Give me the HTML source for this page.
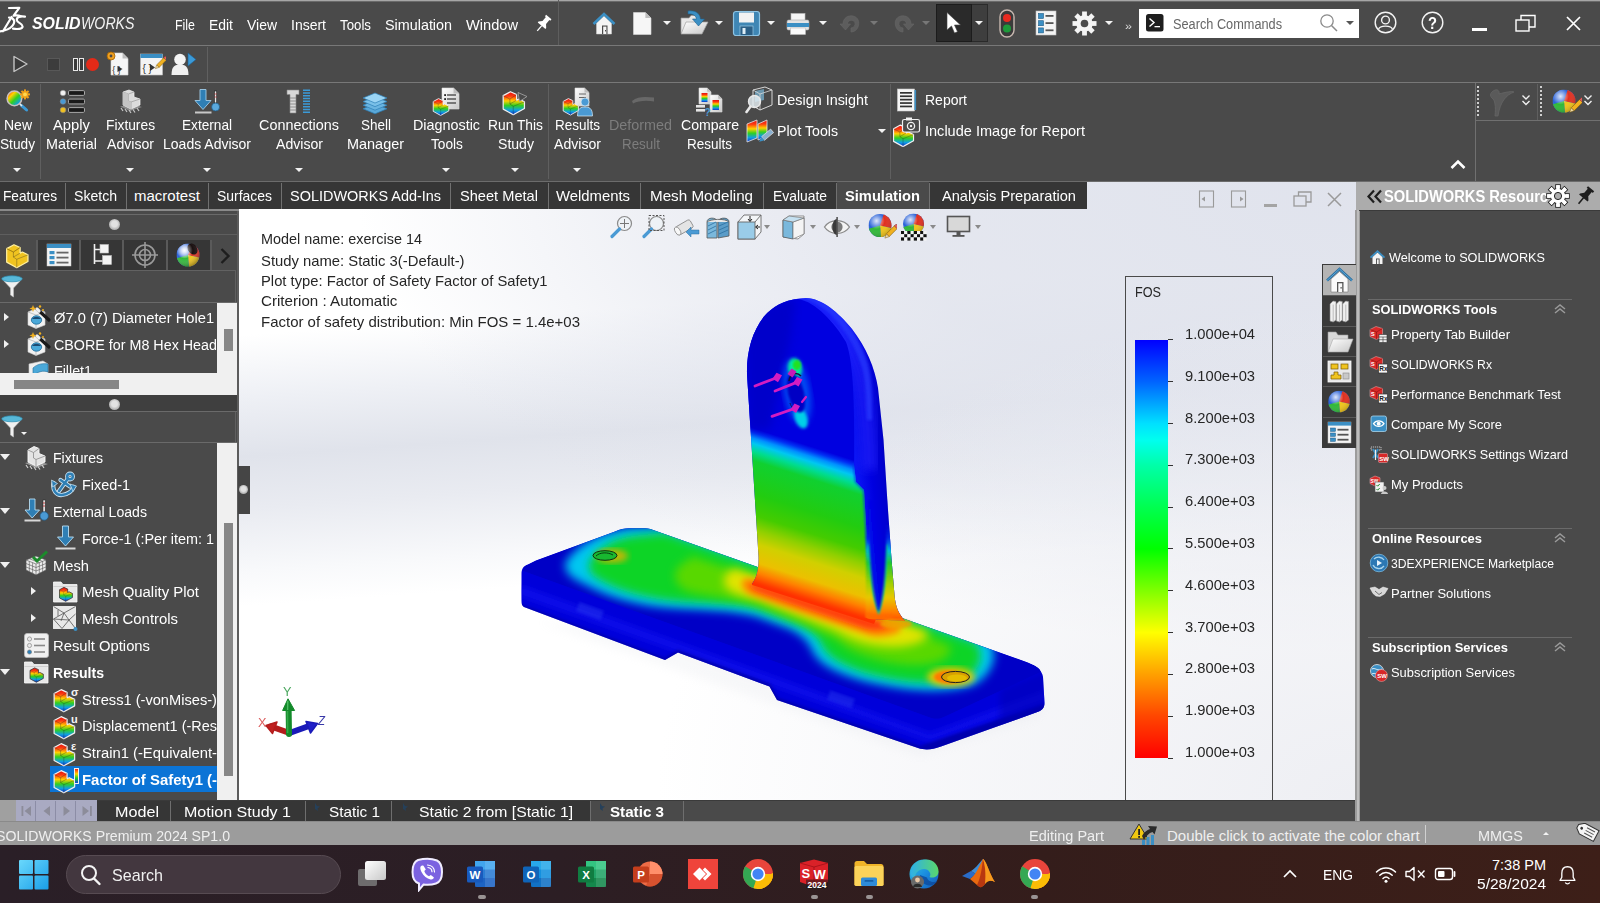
<!DOCTYPE html>
<html lang="en"><head><meta charset="utf-8"><title>SOLIDWORKS Simulation - Factor of Safety</title>
<style>
html,body{margin:0;padding:0;background:#000;}
#app{position:relative;width:1600px;height:903px;overflow:hidden;font-family:'Liberation Sans',sans-serif;color:#fff;}
.t{position:absolute;white-space:pre;line-height:1;transform-origin:0 50%;}
.dd{position:absolute;width:0;height:0;border-left:4px solid transparent;border-right:4px solid transparent;border-top:4px solid #f2f2f2;}
.dot{position:absolute;width:11px;height:11px;border-radius:50%;background:radial-gradient(circle at 50% 45%,#e2e2e2 0 35%,#bdbdbd 60%,#8a8a8a 100%);}
.exd{position:absolute;width:0;height:0;border-left:5.5px solid transparent;border-right:5.5px solid transparent;border-top:6px solid #f0f0f0;}
.exr{position:absolute;width:0;height:0;border-top:4.5px solid transparent;border-bottom:4.5px solid transparent;border-left:5.5px solid #f0f0f0;margin-left:-2px;margin-top:.5px;}
</style></head>
<body><div id="app">
<div style="position:absolute;left:0px;top:0px;width:1600px;height:845px;background:#4a4a4a;"></div>
<div style="position:absolute;left:239px;top:182px;width:1117px;height:618px;background:#fff;"></div>
<div style="position:absolute;left:239px;top:182px;width:1117px;height:618px;background:linear-gradient(176deg,#ffffff 0%,#ffffff 22%,#eef0f5 31%,#e0e3eb 39.5%,#e9ebf1 47%,#f8f9fb 56%,#ffffff 61%,#ffffff 100%);-webkit-mask-image:linear-gradient(90deg,#000 0%,#000 45%,rgba(0,0,0,.55) 100%);mask-image:linear-gradient(90deg,#000 0%,#000 45%,rgba(0,0,0,.55) 100%)"></div>
<div style="position:absolute;left:239px;top:182px;width:1117px;height:618px;background:radial-gradient(ellipse 1000px 470px at 100% 0%,rgba(223,226,236,.96) 0%,rgba(223,226,236,.82) 48%,rgba(223,226,236,.5) 72%,rgba(223,226,236,.25) 86%,rgba(223,226,236,0) 100%);"></div>
<div style="position:absolute;left:239px;top:182px;width:1117px;height:618px;background:radial-gradient(ellipse 700px 500px at 100% 100%,rgba(236,237,242,.9) 0%,rgba(236,237,242,.5) 50%,rgba(236,237,242,0) 100%);"></div>
<div style="position:absolute;left:0px;top:0px;width:1600px;height:1px;background:#a6a6a6;"></div>
<div style="position:absolute;left:0px;top:1px;width:1600px;height:1px;background:#6a6a6a;"></div>
<div style="position:absolute;left:0px;top:45px;width:1600px;height:1px;background:#787878;"></div>
<div style="position:absolute;left:558px;top:0px;width:1px;height:45px;background:#5e5e5e;"></div>
<div style="position:absolute;left:0px;top:82px;width:1600px;height:1px;background:#787878;"></div>
<div style="position:absolute;left:207px;top:47px;width:1px;height:35px;background:#606060;"></div>
<div style="position:absolute;left:40px;top:84px;width:1px;height:95px;background:#5f5f5f;"></div>
<div style="position:absolute;left:548px;top:84px;width:1px;height:95px;background:#5f5f5f;"></div>
<div style="position:absolute;left:890px;top:84px;width:1px;height:95px;background:#5f5f5f;"></div>
<div style="position:absolute;left:1475px;top:83px;width:1px;height:98px;background:#707070;"></div>
<div style="position:absolute;left:1475px;top:120px;width:125px;height:1px;background:#707070;"></div>
<div style="position:absolute;left:1537px;top:84px;width:1px;height:36px;background:#5f5f5f;"></div>
<div style="position:absolute;left:1477px;top:86px;width:2px;height:32px;background:repeating-linear-gradient(#cfcfcf 0 2px,transparent 2px 4px)"></div>
<div style="position:absolute;left:1540px;top:86px;width:2px;height:32px;background:repeating-linear-gradient(#cfcfcf 0 2px,transparent 2px 4px)"></div>
<div style="position:absolute;left:0px;top:181px;width:1600px;height:1px;background:#6c6c6c;"></div>
<div style="position:absolute;left:0px;top:182px;width:1087px;height:27px;background:#363636;"></div>
<div style="position:absolute;left:837px;top:182px;width:92px;height:27px;background:#4a4a4a;"></div>
<div style="position:absolute;left:65px;top:183px;width:1px;height:26px;background:#707070;"></div>
<div style="position:absolute;left:126px;top:183px;width:1px;height:26px;background:#707070;"></div>
<div style="position:absolute;left:208px;top:183px;width:1px;height:26px;background:#707070;"></div>
<div style="position:absolute;left:281px;top:183px;width:1px;height:26px;background:#707070;"></div>
<div style="position:absolute;left:450px;top:183px;width:1px;height:26px;background:#707070;"></div>
<div style="position:absolute;left:548px;top:183px;width:1px;height:26px;background:#707070;"></div>
<div style="position:absolute;left:640px;top:183px;width:1px;height:26px;background:#707070;"></div>
<div style="position:absolute;left:763px;top:183px;width:1px;height:26px;background:#707070;"></div>
<div style="position:absolute;left:836px;top:183px;width:1px;height:26px;background:#707070;"></div>
<div style="position:absolute;left:929px;top:183px;width:1px;height:26px;background:#707070;"></div>
<div style="position:absolute;left:0px;top:209px;width:239px;height:2px;background:#8a8a8a;"></div>
<svg style="position:absolute;left:239px;top:209px;overflow:hidden" width="1117" height="591" viewBox="239 209 1117 591"><defs>
<filter id="b3" x="-10%" y="-10%" width="120%" height="120%"><feGaussianBlur stdDeviation="3"/></filter>
<filter id="b5" x="-10%" y="-10%" width="120%" height="120%"><feGaussianBlur stdDeviation="5"/></filter>
<filter id="b2" x="-10%" y="-10%" width="120%" height="120%"><feGaussianBlur stdDeviation="1.8"/></filter>
<filter id="b1" x="-10%" y="-10%" width="120%" height="120%"><feGaussianBlur stdDeviation="0.9"/></filter>
<clipPath id="cpP"><path d="M521.5 574 C521.5 568 524 566 528 564.5 L536 560.5 L615 531.5 C620 529.5 624 528.3 629 528.3 L645 528.3 C649 528.3 652 529.5 656 531 L1025 661.5 C1034 665 1042 669 1043 677 L1044.5 703 C1044.5 708 1042 710.5 1036 712.5 L941 746.5 C932 749.5 926 750.5 918 748 L777 700 L769.5 686.5 L678 652.5 L665 660 L524 607 C522 606 521.5 604 521.5 601 Z"/></clipPath>
<clipPath id="cpT"><path d="M523 571 C523 567 525 566 528 564.5 L536 560.5 L615 531.5 C620 529.5 624 528.3 629 528.3 L645 528.3 C649 528.3 652 529.5 656 531 L1025 661.5 C1034 665 1040 667 1041 672 L944 717 C940 719 936 719.5 931 718 Z"/></clipPath>
<clipPath id="cpU"><path d="M752 584 C757 577 759 568 758.5 556 L747 374 C746.5 352 752 332 764 316.5 C775 304 790 298.5 806 298 C822 298.5 838 312 852 329 C866 347 875 368 878 388 L883.5 440 L887.5 503 L891.5 559 L894.5 595 C895.5 606 898 613 905 621 L870 619 Z"/></clipPath>
<clipPath id="cpF"><path d="M752 584 C757 577 759 568 758.5 556 L747 374 C746.5 352 752 332 764 316.5 C772 307 784 300 798 299 C816 302 834 322 846 342 C853 360 855 400 854 464 L856 482 L864 490 L867 540 L869 560 L874 600 L878.5 613 L874 624 L752 585 Z"/></clipPath>
<linearGradient id="gF" gradientUnits="userSpaceOnUse" x1="-54.3" y1="169.5" x2="-99.4" y2="310.4">
<stop offset="0" stop-color="#0000e0"/><stop offset=".03" stop-color="#0030f4"/><stop offset=".065" stop-color="#0090ff"/><stop offset=".10" stop-color="#00c8f0"/>
<stop offset=".15" stop-color="#00dc90"/><stop offset=".21" stop-color="#10d030"/><stop offset=".42" stop-color="#22cc10"/>
<stop offset=".56" stop-color="#44cc00"/><stop offset=".65" stop-color="#90d000"/><stop offset=".74" stop-color="#d0d000"/>
<stop offset=".86" stop-color="#ecc000"/><stop offset=".925" stop-color="#ff8000"/><stop offset=".985" stop-color="#ff3c00"/><stop offset="1" stop-color="#ff3000"/></linearGradient>
<linearGradient id="gPl" gradientUnits="userSpaceOnUse" x1="700" y1="600" x2="680" y2="660">
<stop offset="0" stop-color="#0000c4"/><stop offset=".45" stop-color="#0808ea"/><stop offset=".8" stop-color="#0000d6"/><stop offset="1" stop-color="#0000a8"/></linearGradient>
<linearGradient id="gRim" gradientUnits="userSpaceOnUse" x1="0" y1="520" x2="0" y2="622">
<stop offset="0" stop-color="#0010d8" stop-opacity="0"/><stop offset=".18" stop-color="#0030e8" stop-opacity=".9"/><stop offset=".3" stop-color="#00b8e0"/><stop offset=".42" stop-color="#20c830"/>
<stop offset=".62" stop-color="#a0d000"/><stop offset=".76" stop-color="#e8c800"/><stop offset=".9" stop-color="#ff8000"/><stop offset="1" stop-color="#ff4800"/></linearGradient>
<linearGradient id="gSide" gradientUnits="userSpaceOnUse" x1="850" y1="400" x2="892" y2="396">
<stop offset="0" stop-color="#0a14f4"/><stop offset=".35" stop-color="#0000e0"/><stop offset="1" stop-color="#0000b8"/></linearGradient>
</defs><path d="M540 622 L920 756 L1040 716 L1044 690 L700 640 Z" fill="#c8ccd6" opacity=".12" filter="url(#b5)"/><path d="M521.5 574 C521.5 568 524 566 528 564.5 L536 560.5 L615 531.5 C620 529.5 624 528.3 629 528.3 L645 528.3 C649 528.3 652 529.5 656 531 L1025 661.5 C1034 665 1042 669 1043 677 L1044.5 703 C1044.5 708 1042 710.5 1036 712.5 L941 746.5 C932 749.5 926 750.5 918 748 L777 700 L769.5 686.5 L678 652.5 L665 660 L524 607 C522 606 521.5 604 521.5 601 Z" fill="#0000da"/><g clip-path="url(#cpP)"><path d="M520 585 L930 733 L1046 690 L1046 700 L930 742 L520 596 Z" fill="#1418f6" opacity=".55" filter="url(#b3)"/><path d="M520 604 L665 658 L678 650 L770 684 L778 698 L920 746 L1046 704 L1046 716 L920 756 L520 614 Z" fill="#000090" opacity=".6" filter="url(#b2)"/><path d="M1000 690 L1046 670 L1046 715 L1000 730 Z" fill="#0000b0" opacity=".5" filter="url(#b3)"/><rect x="577" y="606" width="26" height="10" fill="#2a3cf0" opacity=".45" filter="url(#b2)" transform="rotate(20 590 611)"/><rect x="828" y="694" width="26" height="10" fill="#2a3cf0" opacity=".45" filter="url(#b2)" transform="rotate(19 840 699)"/></g><g clip-path="url(#cpT)"><path d="M523 571 C523 567 525 566 528 564.5 L536 560.5 L615 531.5 C620 529.5 624 528.3 629 528.3 L645 528.3 C649 528.3 652 529.5 656 531 L1025 661.5 C1034 665 1040 667 1041 672 L944 717 C940 719 936 719.5 931 718 Z" fill="#0000c6"/><g filter="url(#b5)"><path d="M564 566 C573 546 600 532 630 528 L662 527 L760 561 L900 610 L990 642 C1000 656 990 676 975 684 C950 694 905 692 860 680 C835 672 818 664 812 650 C808 640 800 634 790 629 L758 617 C735 610 700 610 670 608 C640 606 610 598 588 586 C575 580 564 574 566 566 Z" fill="#00c8f0"/></g><g filter="url(#b5)"><path d="M588 566 C594 550 612 539 634 536 L664 533 L760 566 L900 616 L976 643 C986 656 978 672 966 678 C945 686 905 684 866 673 C845 666 828 658 822 646 C818 634 806 628 794 623 L760 610 C738 603 705 604 675 601 C648 598 622 592 604 582 C594 577 587 572 590 566 Z" fill="#10d428"/></g><g filter="url(#b5)"><path d="M690 556 L760 578 L905 626 L950 646 C954 660 930 668 900 664 C870 660 846 650 838 640 L800 622 L760 606 C740 598 715 598 690 592 C670 586 670 566 690 560 Z" fill="#58d800"/></g><g filter="url(#b5)"><path d="M733 568 L762 578 L905 624 L928 632 C930 642 905 650 880 646 C860 644 845 636 835 630 L795 614 L760 600 C745 596 730 594 725 586 C722 578 726 572 733 570 Z" fill="#e0e400"/></g><g filter="url(#b3)"><path d="M746 578 L770 584 L900 624 C906 632 890 638 872 636 L800 612 L754 596 C742 592 738 582 746 578 Z" fill="#ff8a00"/><path d="M752 582 L890 624 C888 631 876 632 864 629 L790 604 L756 592 C748 588 748 584 752 582 Z" fill="#ff3a08"/></g><ellipse cx="951" cy="677" rx="24" ry="10" fill="#f0c800" opacity=".9" filter="url(#b3)"/><ellipse cx="949" cy="677" rx="15" ry="6.5" fill="#ff7a00" filter="url(#b2)"/><ellipse cx="612" cy="556" rx="16" ry="7" fill="#e8b000" opacity=".8" filter="url(#b3)"/></g><ellipse cx="955.5" cy="677" rx="14" ry="5.6" fill="#d8a000" stroke="#202020" stroke-width="1"/><ellipse cx="957" cy="678" rx="10" ry="3.6" fill="#e8c400" opacity=".8"/><ellipse cx="605" cy="555.5" rx="12" ry="4.8" fill="#18b830" stroke="#103010" stroke-width="1"/><path d="M596 556 C600 552 608 552 613 555" stroke="#084010" stroke-width="1" fill="none"/><path d="M752 584 C757 577 759 568 758.5 556 L747 374 C746.5 352 752 332 764 316.5 C775 304 790 298.5 806 298 C822 298.5 838 312 852 329 C866 347 875 368 878 388 L883.5 440 L887.5 503 L891.5 559 L894.5 595 C895.5 606 898 613 905 621 L870 619 Z" fill="url(#gSide)"/><g clip-path="url(#cpU)"><path d="M790 304 C822 306 846 332 858 366 C866 392 868 430 870 470" stroke="#2a2cff" stroke-width="16" fill="none" filter="url(#b5)" opacity=".55"/><path d="M800 298 C830 304 852 336 862 368 C866 384 866 400 867 420 L872 420 C872 396 872 380 868 364 C858 330 834 300 806 296 Z" fill="#2a3cff" opacity=".7" filter="url(#b2)"/><path d="M880 390 L886 470 L893 580 L900 622 L910 622 L898 500 L884 380 Z" fill="#000098" opacity=".55" filter="url(#b2)"/></g><g clip-path="url(#cpF)"><rect x="730" y="290" width="170" height="340" fill="url(#gF)"/><path d="M854 464 L856 482 L864 490 L867 540 L869 560 L874 600" stroke="#0040e8" stroke-width="2.5" fill="none" filter="url(#b1)" opacity=".8"/><path d="M745 330 L770 305 L796 298 L790 340 L770 430 L748 430 Z" fill="#0000b8" opacity=".55" filter="url(#b5)"/><ellipse cx="797" cy="392" rx="13" ry="33" fill="#0060f8" filter="url(#b3)" transform="rotate(-10 797 392)" opacity=".8"/><ellipse cx="795" cy="368" rx="7" ry="10" fill="#00e8a0" filter="url(#b2)" transform="rotate(-10 795 368)"/><ellipse cx="797" cy="365" rx="4" ry="5" fill="#20e020" filter="url(#b1)"/><ellipse cx="801" cy="418" rx="6" ry="11" fill="#00d0e8" filter="url(#b2)" transform="rotate(-20 801 418)"/><ellipse cx="796" cy="393" rx="8" ry="20" fill="#0000c4" transform="rotate(-14 796 393)" filter="url(#b1)"/><path d="M789 381 C790 374 796 371 801 376" stroke="#101040" stroke-width="1.6" fill="none"/><path d="M790 403 C791 407 794 410 797 410" stroke="#101060" stroke-width="1" fill="none"/></g><g clip-path="url(#cpU)"><path d="M866 520 L900 520 L930 632 L866 632 Z" fill="url(#gRim)" filter="url(#b1)"/><path d="M869.3 545 C870.3 572 873 596 878.6 611.8 C883 599 885.8 575 886.3 545" fill="none" stroke="#00c890" stroke-width="2.4" filter="url(#b1)"/><path d="M868.6 520 C869.5 560 872.5 594 878.6 611.8 C883.5 598 886.3 570 886.5 520 L887 500 L868.2 500 Z" fill="url(#gSide)" filter="url(#b1)"/><path d="M866 612 L878 616 L890 614 L898 624 L866 626 Z" fill="#ff6a00" filter="url(#b2)" opacity=".9"/></g><ellipse cx="896" cy="624" rx="16" ry="4.5" fill="#f0a000" filter="url(#b2)" opacity=".85"/><line x1="755" y1="386" x2="778" y2="377.2" stroke="#d41cc2" stroke-width="2.8" stroke-linecap="round"/><path d="M772.5 378.7 L776.5 372.7 L782 375.2 L778 382.2 Z" fill="#d41cc2"/><line x1="775" y1="391" x2="798.5" y2="381.6" stroke="#d41cc2" stroke-width="2.8" stroke-linecap="round"/><path d="M793.0 383.1 L797.0 377.1 L802.5 379.6 L798.5 386.6 Z" fill="#d41cc2"/><line x1="772" y1="416.4" x2="796" y2="408" stroke="#d41cc2" stroke-width="2.8" stroke-linecap="round"/><path d="M790.5 409.5 L794.5 403.5 L800 406 L796 413 Z" fill="#d41cc2"/><path d="M787.5 374 L791.5 368.5 L796.5 371.5 L792.5 377.5 Z" fill="#c81ab6"/><path d="M802 402 L806 397" stroke="#d41cc2" stroke-width="2.2" stroke-linecap="round"/><g>
<path d="M289.5 733 L271 726.5" stroke="#b41c1c" stroke-width="6" stroke-linecap="round"/><path d="M277 722 L266 725.5 L272.5 733.5 Z" fill="#c02020" stroke="#b41c1c" stroke-width="1.5" stroke-linejoin="round"/>
<path d="M289.5 733 L309 726" stroke="#1a1ab8" stroke-width="6" stroke-linecap="round"/><path d="M306 721.5 L317.5 723.5 L310.5 733 Z" fill="#2020c8" stroke="#1a1ab8" stroke-width="1.5" stroke-linejoin="round"/>
<path d="M289 734 L288.6 708" stroke="#138a2a" stroke-width="6" stroke-linecap="round"/><path d="M287.6 733 L287.4 706" stroke="#3cb050" stroke-width="1.6" opacity=".8"/>
<path d="M282.6 710.5 L288 698.8 L294.6 710.5 Z" fill="#138a2a" stroke="#138a2a" stroke-width="1" stroke-linejoin="round"/><path d="M287.8 701 L287.6 710" stroke="#5cc870" stroke-width="1.4" opacity=".8"/>
</g></svg>
<span class="t" style="left:283.4px;top:686.2px;font-size:12.5px;color:#4ca860;transform:scaleX(1.019);">Y</span>
<span class="t" style="left:258.4px;top:717.4px;font-size:12px;color:#dc6060;transform:scaleX(1.060);">X</span>
<span class="t" style="left:317.8px;top:714.9px;font-size:12px;color:#3838a8;font-style:italic;transform:scaleX(0.953);">Z</span>
<span class="t" style="left:175.0px;top:16.7px;font-size:15px;transform:scaleX(0.827);">File</span>
<span class="t" style="left:209.0px;top:16.7px;font-size:15px;transform:scaleX(0.928);">Edit</span>
<span class="t" style="left:247.0px;top:16.7px;font-size:15px;transform:scaleX(0.930);">View</span>
<span class="t" style="left:291.0px;top:16.7px;font-size:15px;transform:scaleX(0.933);">Insert</span>
<span class="t" style="left:340.0px;top:16.7px;font-size:15px;transform:scaleX(0.885);">Tools</span>
<span class="t" style="left:385.0px;top:16.7px;font-size:15px;transform:scaleX(0.957);">Simulation</span>
<span class="t" style="left:466.0px;top:16.7px;font-size:15px;transform:scaleX(0.975);">Window</span>
<span class="t" style="left:32.4px;top:16.0px;font-size:16px;font-weight:700;font-style:italic;transform:scaleX(0.992);">SOLID</span>
<span class="t" style="left:81.2px;top:16.0px;font-size:16px;color:#f4f4f4;font-style:italic;transform:scaleX(0.885);">WORKS</span>
<div style="position:absolute;left:1139px;top:9px;width:220px;height:29px;background:#fff;"></div>
<span class="t" style="left:1173.0px;top:17.2px;font-size:14px;color:#666;transform:scaleX(0.910);">Search Commands</span>
<span class="t" style="left:3.5px;top:116.7px;font-size:15px;transform:scaleX(0.933);">New</span>
<span class="t" style="left:0.0px;top:136.0px;font-size:15px;transform:scaleX(0.912);">Study</span>
<span class="t" style="left:53.0px;top:116.7px;font-size:15px;transform:scaleX(0.986);">Apply</span>
<span class="t" style="left:46.0px;top:136.0px;font-size:15px;transform:scaleX(0.956);">Material</span>
<span class="t" style="left:106.0px;top:116.7px;font-size:15px;transform:scaleX(0.919);">Fixtures</span>
<span class="t" style="left:107.0px;top:136.0px;font-size:15px;transform:scaleX(0.939);">Advisor</span>
<span class="t" style="left:182.0px;top:116.7px;font-size:15px;transform:scaleX(0.909);">External</span>
<span class="t" style="left:163.0px;top:136.0px;font-size:15px;transform:scaleX(0.934);">Loads Advisor</span>
<span class="t" style="left:259.0px;top:116.7px;font-size:15px;transform:scaleX(0.959);">Connections</span>
<span class="t" style="left:275.5px;top:136.0px;font-size:15px;transform:scaleX(0.939);">Advisor</span>
<span class="t" style="left:360.5px;top:116.7px;font-size:15px;transform:scaleX(0.899);">Shell</span>
<span class="t" style="left:347.0px;top:136.0px;font-size:15px;transform:scaleX(0.963);">Manager</span>
<span class="t" style="left:413.0px;top:116.7px;font-size:15px;transform:scaleX(0.957);">Diagnostic</span>
<span class="t" style="left:430.5px;top:136.0px;font-size:15px;transform:scaleX(0.913);">Tools</span>
<span class="t" style="left:488.0px;top:116.7px;font-size:15px;transform:scaleX(0.920);">Run This</span>
<span class="t" style="left:497.5px;top:136.0px;font-size:15px;transform:scaleX(0.938);">Study</span>
<span class="t" style="left:554.5px;top:116.7px;font-size:15px;transform:scaleX(0.899);">Results</span>
<span class="t" style="left:553.5px;top:136.0px;font-size:15px;transform:scaleX(0.939);">Advisor</span>
<span class="t" style="left:609.0px;top:116.7px;font-size:15px;color:#7d7d7d;transform:scaleX(0.957);">Deformed</span>
<span class="t" style="left:621.5px;top:136.0px;font-size:15px;color:#7d7d7d;transform:scaleX(0.893);">Result</span>
<span class="t" style="left:680.5px;top:116.7px;font-size:15px;transform:scaleX(0.940);">Compare</span>
<span class="t" style="left:687.0px;top:136.0px;font-size:15px;transform:scaleX(0.899);">Results</span>
<span class="t" style="left:777.0px;top:92.0px;font-size:15px;transform:scaleX(0.957);">Design Insight</span>
<span class="t" style="left:777.0px;top:123.4px;font-size:15px;transform:scaleX(0.942);">Plot Tools</span>
<span class="t" style="left:925.0px;top:92.0px;font-size:15px;transform:scaleX(0.933);">Report</span>
<span class="t" style="left:925.0px;top:123.4px;font-size:15px;transform:scaleX(0.969);">Include Image for Report</span>
<div class="dd" style="left:13px;top:168px"></div>
<div class="dd" style="left:126px;top:168px"></div>
<div class="dd" style="left:203px;top:168px"></div>
<div class="dd" style="left:295px;top:168px"></div>
<div class="dd" style="left:442px;top:168px"></div>
<div class="dd" style="left:511px;top:168px"></div>
<div class="dd" style="left:573px;top:168px"></div>
<div class="dd" style="left:663px;top:21px"></div>
<div class="dd" style="left:715px;top:21px"></div>
<div class="dd" style="left:767px;top:21px"></div>
<div class="dd" style="left:819px;top:21px"></div>
<div class="dd" style="left:1105px;top:21px"></div>
<div class="dd" style="left:870px;top:21px;border-top-color:#777"></div>
<div class="dd" style="left:922px;top:21px;border-top-color:#777"></div>
<div class="dd" style="left:878px;top:129px"></div>
<span class="t" style="left:3.0px;top:187.7px;font-size:15px;transform:scaleX(0.912);">Features</span>
<span class="t" style="left:74.0px;top:187.7px;font-size:15px;transform:scaleX(0.938);">Sketch</span>
<span class="t" style="left:134.0px;top:187.7px;font-size:15px;">macrotest</span>
<span class="t" style="left:217.0px;top:187.7px;font-size:15px;transform:scaleX(0.929);">Surfaces</span>
<span class="t" style="left:290.0px;top:187.7px;font-size:15px;transform:scaleX(0.964);">SOLIDWORKS Add-Ins</span>
<span class="t" style="left:460.0px;top:187.7px;font-size:15px;transform:scaleX(0.974);">Sheet Metal</span>
<span class="t" style="left:556.0px;top:187.7px;font-size:15px;transform:scaleX(0.990);">Weldments</span>
<span class="t" style="left:650.0px;top:187.7px;font-size:15px;transform:scaleX(1.013);">Mesh Modeling</span>
<span class="t" style="left:773.0px;top:187.7px;font-size:15px;transform:scaleX(0.925);">Evaluate</span>
<span class="t" style="left:845.0px;top:187.7px;font-size:15px;font-weight:700;transform:scaleX(0.978);">Simulation</span>
<span class="t" style="left:942.0px;top:187.7px;font-size:15px;transform:scaleX(0.974);">Analysis Preparation</span>
<div style="position:absolute;left:0px;top:211px;width:239px;height:589px;background:#4a4a4a;"></div>
<div style="position:absolute;left:237px;top:211px;width:2px;height:589px;background:#5c5c5c;"></div>
<div style="position:absolute;left:0px;top:214px;width:237px;height:1px;background:#6a6a6a;"></div>
<div class="dot" style="left:109px;top:219px"></div>
<div style="position:absolute;left:0px;top:234px;width:237px;height:1px;background:#5e5e5e;"></div>
<div style="position:absolute;left:37px;top:240px;width:174px;height:30px;background:#363636;"></div>
<div style="position:absolute;left:36px;top:240px;width:2px;height:30px;background:#5a5a5a;"></div>
<div style="position:absolute;left:79px;top:240px;width:2px;height:30px;background:#5a5a5a;"></div>
<div style="position:absolute;left:122px;top:240px;width:2px;height:30px;background:#5a5a5a;"></div>
<div style="position:absolute;left:166px;top:240px;width:2px;height:30px;background:#5a5a5a;"></div>
<div style="position:absolute;left:210px;top:240px;width:2px;height:30px;background:#5a5a5a;"></div>
<div style="position:absolute;left:0px;top:270px;width:236px;height:1px;background:#626262;"></div>
<div style="position:absolute;left:235px;top:270px;width:1px;height:33px;background:#606060;"></div>
<div style="position:absolute;left:0px;top:302px;width:237px;height:1px;background:#6a6a6a;"></div>
<div style="position:absolute;left:217px;top:303px;width:20px;height:92px;background:#f0f0f0;"></div>
<div style="position:absolute;left:0px;top:373px;width:237px;height:22px;background:#f0f0f0;"></div>
<div style="position:absolute;left:224px;top:329px;width:9px;height:22px;background:#868686;"></div>
<div style="position:absolute;left:14px;top:380px;width:105px;height:9px;background:#868686;"></div>
<div style="position:absolute;left:0px;top:395px;width:237px;height:16px;background:#3f3f3f;"></div>
<div class="dot" style="left:109px;top:399px"></div>
<div style="position:absolute;left:0px;top:411px;width:237px;height:1px;background:#6a6a6a;"></div>
<div style="position:absolute;left:235px;top:412px;width:1px;height:30px;background:#606060;"></div>
<div style="position:absolute;left:0px;top:442px;width:237px;height:1px;background:#6a6a6a;"></div>
<div style="position:absolute;left:217px;top:443px;width:20px;height:357px;background:#f0f0f0;"></div>
<div style="position:absolute;left:224px;top:523px;width:9px;height:253px;background:#868686;"></div>
<div style="position:absolute;left:238px;top:466px;width:12px;height:48px;background:#454545;"></div>
<div class="dot" style="left:239px;top:485px;width:9px;height:9px"></div>
<div style="position:absolute;left:50px;top:766px;width:167px;height:26px;background:#0b74d6;"></div>
<span class="t" style="left:54.0px;top:310.0px;font-size:15.5px;transform:scaleX(0.948);">Ø7.0 (7) Diameter Hole1</span>
<span class="t" style="left:54.0px;top:337.0px;font-size:15.5px;transform:scaleX(0.923);">CBORE for M8 Hex Head</span>
<div style="position:absolute;left:0;top:355px;width:217px;height:18px;overflow:hidden">
<span class="t" style="left:54.0px;top:8.4px;font-size:15.5px;transform:scaleX(0.919);">Fillet1</span>
</div>
<span class="t" style="left:53.0px;top:450.4px;font-size:15.5px;transform:scaleX(0.907);">Fixtures</span>
<span class="t" style="left:82.0px;top:477.2px;font-size:15.5px;transform:scaleX(0.929);">Fixed-1</span>
<span class="t" style="left:53.0px;top:504.0px;font-size:15.5px;transform:scaleX(0.909);">External Loads</span>
<span class="t" style="left:82.0px;top:530.8px;font-size:15.5px;transform:scaleX(0.929);">Force-1 (:Per item: 1</span>
<span class="t" style="left:53.0px;top:557.6px;font-size:15.5px;transform:scaleX(0.950);">Mesh</span>
<span class="t" style="left:82.0px;top:584.4px;font-size:15.5px;transform:scaleX(0.963);">Mesh Quality Plot</span>
<span class="t" style="left:82.0px;top:611.2px;font-size:15.5px;transform:scaleX(0.961);">Mesh Controls</span>
<span class="t" style="left:53.0px;top:638.0px;font-size:15.5px;transform:scaleX(0.954);">Result Options</span>
<span class="t" style="left:53.0px;top:664.8px;font-size:15.5px;font-weight:700;transform:scaleX(0.911);">Results</span>
<span class="t" style="left:82.0px;top:691.6px;font-size:15.5px;transform:scaleX(0.944);">Stress1 (-vonMises-)</span>
<span class="t" style="left:82.0px;top:718.4px;font-size:15.5px;transform:scaleX(0.933);">Displacement1 (-Res</span>
<span class="t" style="left:82.0px;top:745.2px;font-size:15.5px;transform:scaleX(0.955);">Strain1 (-Equivalent-</span>
<span class="t" style="left:82.0px;top:772.0px;font-size:15.5px;font-weight:700;transform:scaleX(0.962);">Factor of Safety1 (-</span>
<div class="exd" style="left:0px;top:454px"></div>
<div class="exd" style="left:0px;top:508px"></div>
<div class="exd" style="left:0px;top:562px"></div>
<div class="exd" style="left:0px;top:669px"></div>
<div class="exr" style="left:6px;top:312px"></div>
<div class="exr" style="left:6px;top:339px"></div>
<div class="exr" style="left:33px;top:586px"></div>
<div class="exr" style="left:33px;top:613px"></div>
<span class="t" style="left:261.0px;top:231.7px;font-size:14.3px;color:#262626;transform:scaleX(1.008);">Model name: exercise 14</span>
<span class="t" style="left:260.5px;top:253.7px;font-size:14.3px;color:#262626;transform:scaleX(1.037);">Study name: Static 3(-Default-)</span>
<span class="t" style="left:261.0px;top:273.5px;font-size:14.3px;color:#262626;transform:scaleX(1.033);">Plot type: Factor of Safety Factor of Safety1</span>
<span class="t" style="left:260.5px;top:294.2px;font-size:14.3px;color:#262626;transform:scaleX(1.060);">Criterion : Automatic</span>
<span class="t" style="left:261.0px;top:315.0px;font-size:14.3px;color:#262626;transform:scaleX(1.048);">Factor of safety distribution: Min FOS = 1.4e+03</span>
<div style="position:absolute;left:1125px;top:276px;width:146px;height:524px;border:1px solid #4a4a4a;border-bottom:none;box-sizing:content-box"></div>
<span class="t" style="left:1135.0px;top:284.9px;font-size:14.6px;color:#262626;transform:scaleX(0.867);">FOS</span>
<div style="position:absolute;left:1134.5px;top:339.5px;width:33.5px;height:418px;background:linear-gradient(180deg,#0000ff 0%,#0064ff 10%,#00e0ff 20%,#00ffee 24%,#00ffa8 30%,#00ff50 40%,#00ff00 50%,#80ff00 60%,#ffff00 70%,#ffa000 80%,#ff4600 90%,#ff0000 100%);"></div>
<div style="position:absolute;left:1168px;top:339px;width:5px;height:1px;background:#333;"></div>
<span class="t" style="left:1185.0px;top:326.9px;font-size:14.6px;color:#262626;transform:scaleX(1.009);">1.000e+04</span>
<div style="position:absolute;left:1168px;top:381px;width:5px;height:1px;background:#333;"></div>
<span class="t" style="left:1185.0px;top:368.7px;font-size:14.6px;color:#262626;transform:scaleX(1.009);">9.100e+03</span>
<div style="position:absolute;left:1168px;top:423px;width:5px;height:1px;background:#333;"></div>
<span class="t" style="left:1185.0px;top:410.5px;font-size:14.6px;color:#262626;transform:scaleX(1.009);">8.200e+03</span>
<div style="position:absolute;left:1168px;top:465px;width:5px;height:1px;background:#333;"></div>
<span class="t" style="left:1185.0px;top:452.3px;font-size:14.6px;color:#262626;transform:scaleX(1.009);">7.300e+03</span>
<div style="position:absolute;left:1168px;top:507px;width:5px;height:1px;background:#333;"></div>
<span class="t" style="left:1185.0px;top:494.1px;font-size:14.6px;color:#262626;transform:scaleX(1.009);">6.400e+03</span>
<div style="position:absolute;left:1168px;top:548px;width:5px;height:1px;background:#333;"></div>
<span class="t" style="left:1185.0px;top:535.9px;font-size:14.6px;color:#262626;transform:scaleX(1.009);">5.500e+03</span>
<div style="position:absolute;left:1168px;top:590px;width:5px;height:1px;background:#333;"></div>
<span class="t" style="left:1185.0px;top:577.7px;font-size:14.6px;color:#262626;transform:scaleX(1.009);">4.600e+03</span>
<div style="position:absolute;left:1168px;top:632px;width:5px;height:1px;background:#333;"></div>
<span class="t" style="left:1185.0px;top:619.5px;font-size:14.6px;color:#262626;transform:scaleX(1.009);">3.700e+03</span>
<div style="position:absolute;left:1168px;top:674px;width:5px;height:1px;background:#333;"></div>
<span class="t" style="left:1185.0px;top:661.3px;font-size:14.6px;color:#262626;transform:scaleX(1.009);">2.800e+03</span>
<div style="position:absolute;left:1168px;top:716px;width:5px;height:1px;background:#333;"></div>
<span class="t" style="left:1185.0px;top:703.1px;font-size:14.6px;color:#262626;transform:scaleX(1.009);">1.900e+03</span>
<div style="position:absolute;left:1168px;top:758px;width:5px;height:1px;background:#333;"></div>
<span class="t" style="left:1185.0px;top:744.9px;font-size:14.6px;color:#262626;transform:scaleX(1.009);">1.000e+03</span>
<div style="position:absolute;left:1356px;top:182px;width:244px;height:28px;background:#acacac;"></div>
<div style="position:absolute;left:1356px;top:210px;width:244px;height:612px;background:#4a4a4a;"></div>
<div style="position:absolute;left:1355px;top:210px;width:5px;height:612px;background:#9c9c9c;"></div>
<div style="position:absolute;left:1357px;top:210px;width:2px;height:612px;background:#bcbcbc;"></div>
<div style="position:absolute;left:1359px;top:210px;width:241px;height:1px;background:#3a3a3a;"></div>
<span class="t" style="left:1384.0px;top:188.7px;font-size:16px;font-weight:700;transform:scaleX(0.918);">SOLIDWORKS Resourc</span>
<span class="t" style="left:1389.0px;top:250.9px;font-size:13.5px;transform:scaleX(0.938);">Welcome to SOLIDWORKS</span>
<div style="position:absolute;left:1368px;top:299px;width:204px;height:1px;background:#6a6a6a;"></div>
<span class="t" style="left:1372.0px;top:302.9px;font-size:13.5px;font-weight:700;transform:scaleX(0.949);">SOLIDWORKS Tools</span>
<span class="t" style="left:1391.0px;top:327.9px;font-size:13.5px;transform:scaleX(0.975);">Property Tab Builder</span>
<span class="t" style="left:1391.0px;top:357.9px;font-size:13.5px;transform:scaleX(0.904);">SOLIDWORKS Rx</span>
<span class="t" style="left:1391.0px;top:387.9px;font-size:13.5px;transform:scaleX(0.957);">Performance Benchmark Test</span>
<span class="t" style="left:1391.0px;top:417.9px;font-size:13.5px;transform:scaleX(0.954);">Compare My Score</span>
<span class="t" style="left:1391.0px;top:447.9px;font-size:13.5px;transform:scaleX(0.932);">SOLIDWORKS Settings Wizard</span>
<span class="t" style="left:1391.0px;top:478.4px;font-size:13.5px;transform:scaleX(0.960);">My Products</span>
<div style="position:absolute;left:1368px;top:528px;width:204px;height:1px;background:#6a6a6a;"></div>
<span class="t" style="left:1372.0px;top:531.9px;font-size:13.5px;font-weight:700;transform:scaleX(0.958);">Online Resources</span>
<span class="t" style="left:1391.0px;top:556.9px;font-size:13.5px;transform:scaleX(0.898);">3DEXPERIENCE Marketplace</span>
<span class="t" style="left:1391.0px;top:586.9px;font-size:13.5px;transform:scaleX(0.966);">Partner Solutions</span>
<div style="position:absolute;left:1368px;top:637px;width:204px;height:1px;background:#6a6a6a;"></div>
<span class="t" style="left:1372.0px;top:640.9px;font-size:13.5px;font-weight:700;transform:scaleX(0.959);">Subscription Services</span>
<span class="t" style="left:1391.0px;top:665.9px;font-size:13.5px;transform:scaleX(0.955);">Subscription Services</span>
<div style="position:absolute;left:1322px;top:264px;width:34px;height:184px;background:#3a3a3a;"></div>
<div style="position:absolute;left:1323px;top:265px;width:33px;height:30px;background:#b4b4b4;"></div>
<div style="position:absolute;left:1323px;top:295px;width:33px;height:1px;background:#5a5a5a;"></div>
<div style="position:absolute;left:1323px;top:326px;width:33px;height:1px;background:#5a5a5a;"></div>
<div style="position:absolute;left:1323px;top:356px;width:33px;height:1px;background:#5a5a5a;"></div>
<div style="position:absolute;left:1323px;top:386px;width:33px;height:1px;background:#5a5a5a;"></div>
<div style="position:absolute;left:1323px;top:417px;width:33px;height:1px;background:#5a5a5a;"></div>
<div style="position:absolute;left:0px;top:800px;width:1600px;height:22px;background:#4a4a4a;"></div>
<div style="position:absolute;left:0px;top:800px;width:16px;height:22px;background:#a0a0a0;"></div>
<div style="position:absolute;left:16px;top:800px;width:81px;height:22px;background:#a9aac2;"></div>
<div style="position:absolute;left:35px;top:801px;width:1px;height:20px;background:#8c8da6;"></div>
<div style="position:absolute;left:55px;top:801px;width:1px;height:20px;background:#8c8da6;"></div>
<div style="position:absolute;left:75px;top:801px;width:1px;height:20px;background:#8c8da6;"></div>
<div style="position:absolute;left:97px;top:800px;width:493px;height:22px;background:#363636;"></div>
<div style="position:absolute;left:170px;top:801px;width:1px;height:21px;background:#6e6e6e;"></div>
<div style="position:absolute;left:305px;top:801px;width:1px;height:21px;background:#6e6e6e;"></div>
<div style="position:absolute;left:391px;top:801px;width:1px;height:21px;background:#6e6e6e;"></div>
<div style="position:absolute;left:590px;top:801px;width:1px;height:21px;background:#6e6e6e;"></div>
<div style="position:absolute;left:683px;top:801px;width:1px;height:21px;background:#6e6e6e;"></div>
<div style="position:absolute;left:97px;top:800px;width:1260px;height:1px;background:#3a3a3a;"></div>
<div style="position:absolute;left:1355px;top:800px;width:5px;height:22px;background:#9c9c9c;"></div>
<div style="position:absolute;left:1357px;top:800px;width:2px;height:22px;background:#bcbcbc;"></div>
<span class="t" style="left:115.0px;top:803.7px;font-size:15px;transform:scaleX(1.077);">Model</span>
<span class="t" style="left:184.0px;top:803.7px;font-size:15px;transform:scaleX(1.069);">Motion Study 1</span>
<span class="t" style="left:329.0px;top:803.7px;font-size:15px;transform:scaleX(1.019);">Static 1</span>
<span class="t" style="left:419.0px;top:803.7px;font-size:15px;transform:scaleX(1.050);">Static 2 from [Static 1]</span>
<span class="t" style="left:610.0px;top:803.7px;font-size:15px;font-weight:700;transform:scaleX(1.012);">Static 3</span>
<div style="position:absolute;left:0px;top:822px;width:1600px;height:23px;background:#9c9c9c;"></div>
<div style="position:absolute;left:0px;top:821px;width:1600px;height:1px;background:#8a8a8a;"></div>
<span class="t" style="left:-4.0px;top:827.7px;font-size:15px;color:#efefef;transform:scaleX(0.942);">SOLIDWORKS Premium 2024 SP1.0</span>
<span class="t" style="left:1029.0px;top:827.7px;font-size:15px;color:#efefef;transform:scaleX(0.967);">Editing Part</span>
<span class="t" style="left:1167.0px;top:827.7px;font-size:15px;color:#efefef;">Double click to activate the color chart</span>
<div style="position:absolute;left:1425px;top:825px;width:1px;height:18px;background:#d0d0d0;"></div>
<span class="t" style="left:1478.0px;top:827.7px;font-size:15px;color:#efefef;transform:scaleX(0.964);">MMGS</span>
<div style="position:absolute;left:0px;top:845px;width:1600px;height:58px;background:linear-gradient(90deg,#2a1f27 0%,#2c1e24 35%,#341d1b 65%,#3d1f18 100%);"></div>
<div style="position:absolute;left:66px;top:855px;width:275px;height:39px;border-radius:20px;background:#43373f;border:1px solid #574b52;box-sizing:border-box"></div>
<span class="t" style="left:112.0px;top:866.7px;font-size:17px;color:#f0f0f0;transform:scaleX(0.947);">Search</span>
<span class="t" style="left:1323.0px;top:867.9px;font-size:14.5px;transform:scaleX(0.955);">ENG</span>
<span class="t" style="left:1492.0px;top:857.5px;font-size:14.5px;">7:38 PM</span>
<span class="t" style="left:1477.0px;top:876.9px;font-size:14.5px;transform:scaleX(1.070);">5/28/2024</span>
<svg width="0" height="0" style="position:absolute"><defs>
<linearGradient id="rb" x1="0" y1="0" x2="1" y2="1"><stop offset="0" stop-color="#ff2a10"/><stop offset=".3" stop-color="#ffd000"/><stop offset=".55" stop-color="#30d020"/><stop offset=".8" stop-color="#10a0e0"/><stop offset="1" stop-color="#1030d0"/></linearGradient>
<linearGradient id="rbv" x1="0" y1="0" x2="0" y2="1"><stop offset="0" stop-color="#e01010"/><stop offset=".2" stop-color="#ff3c10"/><stop offset=".4" stop-color="#ffd000"/><stop offset=".6" stop-color="#30d020"/><stop offset=".8" stop-color="#10a0e0"/><stop offset="1" stop-color="#1030d0"/></linearGradient>
<linearGradient id="blu" x1="0" y1="0" x2="0" y2="1"><stop offset="0" stop-color="#8fd0f0"/><stop offset="1" stop-color="#2c7fb8"/></linearGradient>
<linearGradient id="wht" x1="0" y1="0" x2="1" y2="1"><stop offset="0" stop-color="#ffffff"/><stop offset="1" stop-color="#c8c8c8"/></linearGradient>
<linearGradient id="fold" x1="0" y1="0" x2="0" y2="1"><stop offset="0" stop-color="#fff8d8"/><stop offset="1" stop-color="#e8d890"/></linearGradient>
<radialGradient id="sph" cx=".35" cy=".3" r=".8"><stop offset="0" stop-color="#fff" stop-opacity=".85"/><stop offset=".45" stop-color="#fff" stop-opacity="0"/><stop offset="1" stop-color="#000" stop-opacity=".25"/></radialGradient>
</defs></svg>
<svg style="position:absolute;left:0px;top:0px;" width="28" height="36" viewBox="0 0 28 36"><g fill="none" stroke="#fff" stroke-width="2.2" stroke-linecap="round" stroke-linejoin="round"><path d="M9 8 L19.3 7.8 L13.6 15.6 C16 15.2 19 15.4 21 16.2"/><path d="M25 16.6 C20 15.6 16.6 17.2 16.8 20 C17 23 22.6 23.4 22.6 26.4 C22.6 29.2 17 29.4 13 28.6"/><path d="M11.6 17 L3 31.2 M9 17.6 C14.5 17.6 15.5 22 12.6 25.6 C9.6 29.2 4.6 30.8 0 31.4"/></g></svg>
<svg style="position:absolute;left:532px;top:13px;" width="22" height="22" viewBox="0 0 22 22"><g transform="rotate(40 11 11)" fill="#fff"><path d="M7.5 2 H14.5 V3.8 H13.3 V9 L16 12 V13.2 H6 V12 L8.7 9 V3.8 H7.5 Z"/><rect x="10.4" y="13" width="1.3" height="7"/></g></svg>
<svg style="position:absolute;left:592px;top:11px;" width="24" height="25" viewBox="0 0 24 25"><path d="M4.5 12 L4.5 23 L19.5 23 L19.5 12 L12 5 Z" fill="#f4f4f4" stroke="#d0d0d0" stroke-width=".5"/><path d="M1.5 13 L12 3 L22.5 13" fill="none" stroke="#3b8fc4" stroke-width="2.6" stroke-linejoin="miter"/><rect x="10" y="14.5" width="5.5" height="8.5" fill="#4a4a4a"/><rect x="11.2" y="15.6" width="3.2" height="7.4" fill="#f4f4f4"/><rect x="13" y="19" width="1" height="1.4" fill="#4a4a4a"/></svg>
<svg style="position:absolute;left:632px;top:11px;" width="21" height="25" viewBox="0 0 21 25"><path d="M1.5 1.5 L13.399999999999999 1.5 L19.0 7.1000000000000005 L19.0 23.5 L1.5 23.5 Z" fill="#f6f6f6" stroke="#d8d8d8" stroke-width=".6"/><path d="M13.399999999999999 1.5 L13.399999999999999 7.1000000000000005 L19.0 7.1000000000000005 Z" fill="#bdbdbd"/></svg>
<svg style="position:absolute;left:679px;top:9px;" width="31" height="27" viewBox="0 0 31 27"><path d="M2 9 L10 9 L12 6.5 L20 6.5 L20 24 L2 24 Z" fill="#e8e8e8" stroke="#9a9a9a" stroke-width=".7"/><path d="M7 13 L29 13 L23 25 L2 25 Z" fill="url(#wht)" stroke="#a0a0a0" stroke-width=".7"/><path d="M9 2 C16 1 21 4 21.5 10 L25.5 10 L19.5 17 L13.5 10 L17.5 10 C17 6.5 13.5 4.5 9 5 Z" fill="#3b8fc4" stroke="#1f5f8c" stroke-width=".6"/></svg>
<svg style="position:absolute;left:732px;top:10px;" width="29" height="27" viewBox="0 0 29 27"><rect x="1.5" y="1.5" width="26" height="24" rx="2.5" fill="#3f86b4" stroke="#8ec4e4" stroke-width="1.2"/><rect x="7" y="2.5" width="15" height="10" fill="#f2f2f2"/><rect x="8" y="16" width="13" height="9.5" fill="#2b5f86" stroke="#9ccbe6" stroke-width=".7"/><rect x="10.5" y="18" width="3" height="6" fill="#dfeef6"/></svg>
<svg style="position:absolute;left:786px;top:12px;" width="24" height="24" viewBox="0 0 24 24"><rect x="5" y="1.5" width="14" height="8" fill="#f6f6f6" stroke="#bdbdbd" stroke-width=".6"/><rect x="1" y="8" width="22" height="10" rx="1.5" fill="#e4e4e4" stroke="#a8a8a8" stroke-width=".6"/><rect x="1" y="11" width="22" height="4" fill="#3b8fc4"/><rect x="4.5" y="16" width="15" height="6.5" fill="#fafafa" stroke="#bdbdbd" stroke-width=".6"/></svg>
<svg style="position:absolute;left:838px;top:12px;" width="26" height="24" viewBox="0 0 26 24"><path d="M5 12 C5 6 10 3 15 4 C20 5 22 10 20 15 C19 18 16 20 13 20 L13 16 C16 16 17.5 13 17 11 C16.5 8.5 13 7.5 11 9 C10 10 9.5 11 9.5 12 L12.5 12 L7.5 18 L2 12 Z" fill="#5d5d5d" stroke="#666" stroke-width=".6"/></svg>
<svg style="position:absolute;left:890px;top:12px;" width="26" height="24" viewBox="0 0 26 24"><path d="M5 12 C5 6 10 3 15 4 C20 5 22 10 20 15 C19 18 16 20 13 20 L13 16 C16 16 17.5 13 17 11 C16.5 8.5 13 7.5 11 9 C10 10 9.5 11 9.5 12 L12.5 12 L7.5 18 L2 12 Z" fill="#5d5d5d" stroke="#666" stroke-width=".6" transform="translate(26,0) scale(-1,1)"/></svg>
<div style="position:absolute;left:936px;top:4px;width:36px;height:38px;background:#2a2a2a;border:1px solid #1c1c1c;box-sizing:border-box"></div>
<div style="position:absolute;left:972px;top:4px;width:16px;height:38px;background:#3e3e3e;border:1px solid #2a2a2a;border-left:none;box-sizing:border-box"></div>
<div class="dd" style="left:975px;top:21px"></div>
<svg style="position:absolute;left:944px;top:11px;" width="20" height="24" viewBox="0 0 20 24"><path d="M3 1.5 L3 19 L7.5 15 L10.5 22 L13.5 20.7 L10.5 14 L16.5 14 Z" fill="#fff" stroke="#444" stroke-width=".6"/></svg>
<svg style="position:absolute;left:998px;top:8px;" width="18" height="31" viewBox="0 0 18 31"><rect x="2" y="2" width="14" height="27" rx="7" fill="#3a3a3a" stroke="#c8b8b0" stroke-width="1.4"/><circle cx="9" cy="10" r="4" fill="#e82a20"/><circle cx="9" cy="20.5" r="4" fill="#1e9a3a"/></svg>
<svg style="position:absolute;left:1035px;top:10px;" width="22" height="26" viewBox="0 0 22 26"><rect x="1" y="1" width="20" height="24" fill="#f4f4f4" stroke="#c0c0c0" stroke-width=".6"/><rect x="3.5" y="3.5" width="5" height="5" fill="#3b8fc4" stroke="#1d5a86" stroke-width=".6"/><rect x="10.5" y="5.0" width="8" height="1.8" fill="#555"/><rect x="3.5" y="10.7" width="5" height="5" fill="#3b8fc4" stroke="#1d5a86" stroke-width=".6"/><rect x="10.5" y="12.2" width="8" height="1.8" fill="#555"/><rect x="3.5" y="17.9" width="5" height="5" fill="#3b8fc4" stroke="#1d5a86" stroke-width=".6"/><rect x="10.5" y="19.4" width="8" height="1.8" fill="#555"/></svg>
<svg style="position:absolute;left:1071.5px;top:11px;" width="25" height="25" viewBox="0 0 25 25"><g transform="translate(12.5,12.5)" fill="#f4f4f4"><rect x="-2.4" y="-12" width="4.8" height="6" transform="rotate(0)"/><rect x="-2.4" y="-12" width="4.8" height="6" transform="rotate(45)"/><rect x="-2.4" y="-12" width="4.8" height="6" transform="rotate(90)"/><rect x="-2.4" y="-12" width="4.8" height="6" transform="rotate(135)"/><rect x="-2.4" y="-12" width="4.8" height="6" transform="rotate(180)"/><rect x="-2.4" y="-12" width="4.8" height="6" transform="rotate(225)"/><rect x="-2.4" y="-12" width="4.8" height="6" transform="rotate(270)"/><rect x="-2.4" y="-12" width="4.8" height="6" transform="rotate(315)"/><circle r="8.2"/><circle r="3.8" fill="#4a4a4a"/></g></svg>
<span class="t" style="left:1125.0px;top:22.1px;font-size:10px;color:#ddd;transform:scaleX(1.258);">»</span>
<svg style="position:absolute;left:1145px;top:13px;" width="20" height="20" viewBox="0 0 20 20"><rect x="1" y="1" width="17.5" height="17.5" rx="2.5" fill="#1e1e1e"/><path d="M4.5 5.5 L9 9.5 L4.5 13.5" stroke="#fff" stroke-width="1.4" fill="none"/><rect x="9.5" y="13" width="5.5" height="1.3" fill="#fff"/></svg>
<svg style="position:absolute;left:1318px;top:12px;" width="22" height="22" viewBox="0 0 22 22"><circle cx="9" cy="9" r="6.2" fill="none" stroke="#8a8a8a" stroke-width="1.3"/><path d="M13.5 13.5 L19 19" stroke="#8a8a8a" stroke-width="1.5"/></svg>
<div class="dd" style="left:1346px;top:21px;border-top-color:#555"></div>
<svg style="position:absolute;left:1373px;top:10px;" width="25" height="25" viewBox="0 0 25 25"><circle cx="12.5" cy="12.5" r="10.3" fill="none" stroke="#f4f4f4" stroke-width="1.4"/><circle cx="12.5" cy="10" r="3.9" fill="none" stroke="#f4f4f4" stroke-width="1.4"/><path d="M5.5 19.5 C6.5 15 18.5 15 19.5 19.5" fill="none" stroke="#f4f4f4" stroke-width="1.4"/></svg>
<svg style="position:absolute;left:1420px;top:10px;" width="25" height="25" viewBox="0 0 25 25"><circle cx="12.5" cy="12.5" r="10.3" fill="none" stroke="#f4f4f4" stroke-width="1.4"/></svg>
<span class="t" style="left:1428.0px;top:14.7px;font-size:17px;font-weight:700;transform:scaleX(0.866);">?</span>
<div style="position:absolute;left:1472px;top:28px;width:15px;height:2.5px;background:#fff;"></div>
<svg style="position:absolute;left:1514px;top:12px;" width="24" height="22" viewBox="0 0 24 22"><rect x="2" y="8" width="13" height="11" fill="none" stroke="#fff" stroke-width="1.4"/><path d="M7 8 V3.5 H21 V15 H15" fill="none" stroke="#fff" stroke-width="1.4"/></svg>
<svg style="position:absolute;left:1564px;top:14px;" width="20" height="20" viewBox="0 0 20 20"><path d="M3 3 L16 16 M16 3 L3 16" stroke="#fff" stroke-width="1.7"/></svg>
<svg style="position:absolute;left:11px;top:54px;" width="20" height="20" viewBox="0 0 20 20"><path d="M3 2.5 L16 10 L3 17.5 Z" fill="#3a3a3a" stroke="#c4c4c4" stroke-width="1.4" stroke-linejoin="round"/></svg>
<div style="position:absolute;left:47px;top:58px;width:13px;height:13px;background:#3c3c3c;border:1px solid #585858;box-sizing:border-box"></div>
<div style="position:absolute;left:73px;top:58px;width:4.5px;height:13px;background:#3a3a3a;border:1px solid #e8e8e8;box-sizing:border-box"></div>
<div style="position:absolute;left:79px;top:58px;width:4.5px;height:13px;background:#3a3a3a;border:1px solid #e8e8e8;box-sizing:border-box"></div>
<div style="position:absolute;left:86.3px;top:57.5px;width:13px;height:13px;border-radius:50%;background:#e42a18"></div>
<svg style="position:absolute;left:105px;top:50px;" width="26" height="27" viewBox="0 0 26 27"><path d="M6 3 L17.56 3 L23 8.440000000000001 L23 25 L6 25 Z" fill="#f6f6f6" stroke="#d8d8d8" stroke-width=".6"/><path d="M17.56 3 L17.56 8.440000000000001 L23 8.440000000000001 Z" fill="#bdbdbd"/><circle cx="6" cy="6" r="4" fill="#f0a020" stroke="#a06000" stroke-width=".8"/><circle cx="6" cy="6" r="1.4" fill="#4a4a4a"/><path d="M12.5 16 L17.5 19 L12.5 22 Z" fill="#333"/><text x="7.3" y="23" font-size="9" fill="#333" font-family="Liberation Sans,sans-serif">{ }</text></svg>
<svg style="position:absolute;left:139px;top:52px;" width="27" height="25" viewBox="0 0 27 25"><rect x="1.5" y="2" width="22" height="21" fill="#f4f4f4" stroke="#c0c0c0" stroke-width=".6"/><rect x="1.5" y="2" width="22" height="4" fill="#3b8fc4"/><path d="M11 12 L16 15.5 L11 19 Z" fill="#333"/><text x="3.5" y="20" font-size="10" fill="#333" font-family="Liberation Sans,sans-serif">{  }</text><g transform="translate(20,13) scale(0.8) rotate(45)"><rect x="-2.2" y="-11" width="4.4" height="13" fill="#f0b020" stroke="#7a5a10" stroke-width=".6"/><rect x="-2.2" y="-13.5" width="4.4" height="3" fill="#e06060" stroke="#7a3030" stroke-width=".5"/><path d="M-2.2 2 L0 6.5 L2.2 2 Z" fill="#f0d8a0" stroke="#7a5a10" stroke-width=".5"/></g></svg>
<svg style="position:absolute;left:170px;top:50px;" width="28" height="28" viewBox="0 0 28 28"><circle cx="10" cy="9.5" r="5.8" fill="#f4f4f4"/><path d="M1.5 25 C1.5 16 5 14.5 10 14.5 C15 14.5 18.5 16 18.5 25 Z" fill="#f0f0f0"/><path d="M18 3 L26 9.5 L18 16 Z" fill="#3b9ad8" stroke="#1d6090" stroke-width=".6"/></svg>
<svg style="position:absolute;left:4px;top:86px;" width="30" height="30" viewBox="0 0 30 30"><path d="M17.3 19.3 L22.6 24" stroke="#3b9ad8" stroke-width="3" stroke-linecap="round"/><path d="M15 17 L18 20" stroke="#e8e8e8" stroke-width="1.6"/><circle cx="10.4" cy="12.4" r="7.3" fill="url(#rb)" stroke="#c8c0c0" stroke-width="1.5"/><g transform="translate(21,8.4)" fill="#f0a018"><rect x="-1" y="-5" width="2" height="3" transform="rotate(0)"/><rect x="-1" y="-5" width="2" height="3" transform="rotate(45)"/><rect x="-1" y="-5" width="2" height="3" transform="rotate(90)"/><rect x="-1" y="-5" width="2" height="3" transform="rotate(135)"/><rect x="-1" y="-5" width="2" height="3" transform="rotate(180)"/><rect x="-1" y="-5" width="2" height="3" transform="rotate(225)"/><rect x="-1" y="-5" width="2" height="3" transform="rotate(270)"/><rect x="-1" y="-5" width="2" height="3" transform="rotate(315)"/><circle r="3.4"/><circle r="1.9" fill="#ffd850"/></g></svg>
<svg style="position:absolute;left:59px;top:88px;" width="28" height="27" viewBox="0 0 28 27"><circle cx="4" cy="5.0" r="2.8" fill="#f2f2f2" stroke="#888" stroke-width=".5"/><rect x="9.5" y="2.6" width="16" height="4.8" rx="1.2" fill="#1a1a1a" stroke="#a8a8a8" stroke-width="1"/><circle cx="4" cy="13.5" r="2.8" fill="#4a9ad4" stroke="#888" stroke-width=".5"/><rect x="9.5" y="11.1" width="16" height="4.8" rx="1.2" fill="#1a1a1a" stroke="#a8a8a8" stroke-width="1"/><circle cx="4" cy="22.0" r="2.8" fill="#f0c020" stroke="#888" stroke-width=".5"/><rect x="9.5" y="19.6" width="16" height="4.8" rx="1.2" fill="#1a1a1a" stroke="#a8a8a8" stroke-width="1"/></svg>
<svg style="position:absolute;left:118px;top:88px;" width="26" height="28" viewBox="0 0 26 28"><path d="M2 18.5 L14 16 L24 19 L12 23 Z" fill="#8a8a8a"/><path d="M3 20 l2 3 M7 21 l2 3 M11 22 l2 3 M15 21.5 l2 3 M19 20 l2 3" stroke="#c8c8c8" stroke-width="1.2"/><path d="M5 4 L11 2 L16 4 L16 9 L22 11 L22 17 L13 21 L5 17 Z" fill="#dcdcdc" stroke="#f4f4f4" stroke-width=".7"/><path d="M5 4 L10.5 6 L16 4 M10.5 6 L10.5 13 L13 14 L22 11 M13 14 L13 21" fill="none" stroke="#9a9a9a" stroke-width=".7"/><path d="M5 4 L10.5 6 L10.5 13 L13 14 L13 21 L5 17 Z" fill="#c4c4c4"/></svg>
<svg style="position:absolute;left:193px;top:87px;" width="30" height="30" viewBox="0 0 30 30"><path d="M7 2.5 L13 2.5 L13 13.5 L18 13.5 L10 22.5 L2 13.5 L7 13.5 Z" fill="#2f7fb5" stroke="#9ecbe8" stroke-width=".9"/><rect x="2" y="24.5" width="16.5" height="2" fill="#c8c8c8"/><rect x="21.5" y="4" width="2.2" height="12" fill="#e8e8e8" stroke="#222" stroke-width=".6"/><path d="M21.5 7 h2.2 M21.5 10 h2.2" stroke="#c02020" stroke-width=".7"/><circle cx="22.6" cy="20" r="4" fill="#5aa8dc" stroke="#1d5a86" stroke-width=".7"/></svg>
<svg style="position:absolute;left:286px;top:88px;" width="28" height="28" viewBox="0 0 28 28"><path d="M1 2 L13 2 L13 6.5 L10 6.5 L10 25 L4 25 L4 6.5 L1 6.5 Z" fill="#d8d8d8" stroke="#888" stroke-width=".6"/><path d="M4 10 h6 M4 13 h6 M4 16 h6 M4 19 h6 M4 22 h6" stroke="#888" stroke-width=".9"/><rect x="17" y="1.5" width="7" height="1.5" fill="#3b9ad8"/><rect x="17" y="4.25" width="7" height="1.5" fill="#3b9ad8"/><rect x="17" y="7.0" width="7" height="1.5" fill="#3b9ad8"/><rect x="17" y="9.75" width="7" height="1.5" fill="#3b9ad8"/><rect x="17" y="12.5" width="7" height="1.5" fill="#3b9ad8"/><rect x="17" y="15.25" width="7" height="1.5" fill="#3b9ad8"/><rect x="17" y="18.0" width="7" height="1.5" fill="#3b9ad8"/><rect x="17" y="20.75" width="7" height="1.5" fill="#3b9ad8"/><rect x="17" y="23.5" width="7" height="1.5" fill="#3b9ad8"/></svg>
<svg style="position:absolute;left:362px;top:92px;" width="27" height="23" viewBox="0 0 27 23"><path d="M1 16.8 L13 11.8 L25 16.8 L13 21.8 Z" fill="#5aa8d8" stroke="#2c7fb8" stroke-width=".7"/><path d="M1 13.2 L13 8.2 L25 13.2 L13 18.2 Z" fill="#6ab4e0" stroke="#2c7fb8" stroke-width=".7"/><path d="M1 9.6 L13 4.6 L25 9.6 L13 14.6 Z" fill="#7ac0e8" stroke="#2c7fb8" stroke-width=".7"/><path d="M1 6.0 L13 1.0 L25 6.0 L13 11.0 Z" fill="#9ad4f4" stroke="#2c7fb8" stroke-width=".7"/></svg>
<svg style="position:absolute;left:432px;top:87px;" width="30" height="30" viewBox="0 0 30 30"><path d="M10 1 L21.56 1 L27 6.44 L27 22 L10 22 Z" fill="url(#wht)" stroke="#d8d8d8" stroke-width=".6"/><path d="M21.56 1 L21.56 6.44 L27 6.44 Z" fill="#bdbdbd"/><path d="M15 8 h9 M15 12 h9 M15 16 h9" stroke="#555" stroke-width="1.6"/><rect x="12.2" y="7.2" width="1.8" height="1.8" fill="#222"/><rect x="12.2" y="11.2" width="1.8" height="1.8" fill="#222"/><g transform="translate(0,10) scale(0.82)"><path d="M1.5 5.5 L8 2 L13.5 4.5 L13.5 9.5 L15.5 8.5 L20.5 11 L20.5 17 L10.5 22.5 L1.5 17.5 Z" fill="url(#rbv)" stroke="#f0f0f0" stroke-width="1.1" stroke-linejoin="round"/><path d="M1.5 5.5 L7.5 8.5 L13.5 4.5 M7.5 8.5 L7.5 13 L10.5 15 L20.5 11 M10.5 15 L10.5 22.5 M7.5 13 L13.5 9.5" fill="none" stroke="#202020" stroke-width=".7" opacity=".4"/></g></svg>
<svg style="position:absolute;left:501px;top:88px;" width="28" height="28" viewBox="0 0 28 28"><g transform="translate(0.5,1.5) scale(1.12)"><path d="M1.5 5.5 L8 2 L13.5 4.5 L13.5 9.5 L15.5 8.5 L20.5 11 L20.5 17 L10.5 22.5 L1.5 17.5 Z" fill="url(#rbv)" stroke="#f0f0f0" stroke-width="1.1" stroke-linejoin="round"/><path d="M1.5 5.5 L7.5 8.5 L13.5 4.5 M7.5 8.5 L7.5 13 L10.5 15 L20.5 11 M10.5 15 L10.5 22.5 M7.5 13 L13.5 9.5" fill="none" stroke="#202020" stroke-width=".7" opacity=".4"/></g><path d="M17 4.5 L26 8.5 L18.5 13.5 Z" fill="#4a4a4a" stroke="#a8a8a8" stroke-width=".8"/></svg>
<svg style="position:absolute;left:562px;top:87px;" width="31" height="31" viewBox="0 0 31 31"><path d="M13 1 L22.52 1 L27 5.48 L27 19 L13 19 Z" fill="url(#wht)" stroke="#d8d8d8" stroke-width=".6"/><path d="M22.52 1 L22.52 5.48 L27 5.48 Z" fill="#bdbdbd"/><path d="M17 7 h7 M17 10.5 h7" stroke="#666" stroke-width="1.2"/><g transform="translate(0,10) scale(0.8)"><path d="M1.5 5.5 L8 2 L13.5 4.5 L13.5 9.5 L15.5 8.5 L20.5 11 L20.5 17 L10.5 22.5 L1.5 17.5 Z" fill="url(#rbv)" stroke="#f0f0f0" stroke-width="1.1" stroke-linejoin="round"/><path d="M1.5 5.5 L7.5 8.5 L13.5 4.5 M7.5 8.5 L7.5 13 L10.5 15 L20.5 11 M10.5 15 L10.5 22.5 M7.5 13 L13.5 9.5" fill="none" stroke="#202020" stroke-width=".7" opacity=".4"/></g><circle cx="23" cy="15" r="4" fill="#4a9ad4" stroke="#d8ecf8" stroke-width=".7"/><path d="M15.5 29 C15.5 21 19 20 23 20 C27 20 30.5 21 30.5 29 Z" fill="#4a9ad4" stroke="#d8ecf8" stroke-width=".7"/></svg>
<svg style="position:absolute;left:630px;top:95px;" width="26" height="10" viewBox="0 0 26 10"><path d="M2 6 C8 1 16 2 24 2.5 L24 6.5 C16 5 8 6 3 8.5 Z" fill="#686868"/></svg>
<svg style="position:absolute;left:695px;top:87px;" width="30" height="31" viewBox="0 0 30 31"><path d="M4 1 L12.16 1 L16 4.84 L16 17 L4 17 Z" fill="url(#wht)" stroke="#d8d8d8" stroke-width=".6"/><path d="M12.16 1 L12.16 4.84 L16 4.84 Z" fill="#bdbdbd"/><rect x="6.5" y="6" width="6" height="9" fill="url(#rbv)"/><path d="M15 8 L23.16 8 L27 11.84 L27 25 L15 25 Z" fill="url(#wht)" stroke="#d8d8d8" stroke-width=".6"/><path d="M23.16 8 L23.16 11.84 L27 11.84 Z" fill="#bdbdbd"/><rect x="17.5" y="13" width="6.5" height="10" fill="url(#rbv)"/><rect x="1" y="18" width="9" height="2.6" fill="#e4e4e4"/><rect x="1" y="22" width="9" height="2.6" fill="#e4e4e4"/><text x="9.5" y="29" font-size="10" font-weight="700" fill="#4a9ad4" font-family="Liberation Sans,sans-serif">?</text></svg>
<svg style="position:absolute;left:745px;top:86px;" width="29" height="29" viewBox="0 0 29 29"><path d="M8 4 L20 1 L27 4 L27 19 L15 24 L8 20 Z" fill="none" stroke="#d8d8d8" stroke-width="1"/><path d="M10 5 L19 3 L19 14 L10 16 Z" fill="#7ab8d8" opacity=".7"/><path d="M15 8 L27 4 M15 8 L15 24 M8 4 L15 8" stroke="#d8d8d8" stroke-width=".8" fill="none"/><circle cx="9.5" cy="15.5" r="6" fill="#e8f2f8" fill-opacity=".8" stroke="#e8e8e8" stroke-width="1.4"/><path d="M5.5 20.5 L1.5 26" stroke="#e8e8e8" stroke-width="2.6" stroke-linecap="round"/></svg>
<svg style="position:absolute;left:745px;top:117px;" width="29" height="29" viewBox="0 0 29 29"><path d="M2 7 L12 3 L12 21 L2 25 Z" fill="url(#rbv)" stroke="#e8e8e8" stroke-width=".8"/><path d="M13 7 L22 3 L22 19 L13 23 Z" fill="url(#rbv)" stroke="#e8e8e8" stroke-width=".8"/><g transform="translate(21,19) rotate(50)"><rect x="-2.3" y="-8" width="4.6" height="12" fill="#8ab0d0" stroke="#e0e0e0" stroke-width=".7"/><path d="M-2.3 4 L0 9 L2.3 4 Z" fill="#3b8fc4"/></g></svg>
<svg style="position:absolute;left:896px;top:88px;" width="22" height="24" viewBox="0 0 22 24"><rect x="1.5" y="1" width="17" height="22" fill="#f6f6f6" stroke="#c8c8c8" stroke-width=".6"/><rect x="4" y="4.0" width="12" height="1.7" fill="#333"/><rect x="4" y="7.4" width="12" height="1.7" fill="#333"/><rect x="4" y="10.8" width="12" height="1.7" fill="#333"/><rect x="4" y="14.2" width="12" height="1.7" fill="#333"/><rect x="4" y="17.6" width="12" height="1.7" fill="#333"/><rect x="18.5" y="2" width="1.6" height="20" fill="#3b8fc4"/></svg>
<svg style="position:absolute;left:892px;top:116px;" width="30" height="31" viewBox="0 0 30 31"><g transform="translate(0,7) scale(1.05)"><path d="M1.5 5.5 L8 2 L13.5 4.5 L13.5 9.5 L15.5 8.5 L20.5 11 L20.5 17 L10.5 22.5 L1.5 17.5 Z" fill="url(#rbv)" stroke="#f0f0f0" stroke-width="1.1" stroke-linejoin="round"/><path d="M1.5 5.5 L7.5 8.5 L13.5 4.5 M7.5 8.5 L7.5 13 L10.5 15 L20.5 11 M10.5 15 L10.5 22.5 M7.5 13 L13.5 9.5" fill="none" stroke="#202020" stroke-width=".7" opacity=".4"/></g><rect x="10.5" y="3.5" width="17" height="12.5" rx="1.8" fill="#4a4a4a" stroke="#f0f0f0" stroke-width="1.2"/><rect x="14" y="1.5" width="6" height="3" fill="#f0f0f0"/><circle cx="19" cy="10" r="3.6" fill="none" stroke="#f0f0f0" stroke-width="1.3"/><circle cx="19" cy="10" r="1.2" fill="#f0f0f0"/></svg>
<svg style="position:absolute;left:1449px;top:157px;" width="18" height="14" viewBox="0 0 18 14"><path d="M2.5 11 L9 4.5 L15.5 11" fill="none" stroke="#fff" stroke-width="2.6"/></svg>
<svg style="position:absolute;left:1486px;top:86px;" width="32" height="34" viewBox="0 0 32 34"><path d="M6 6 C10 2 14 4 13 8 C20 6 26 5 28 6 C20 9 14 16 12 30 L9 30 C10 20 9 14 6 12 C4 10 4 8 6 6 Z" fill="#5a5a5a" stroke="#666" stroke-width=".8"/></svg>
<svg style="position:absolute;left:1520.5px;top:94px;" width="10" height="14" viewBox="0 0 10 14"><path d="M1.5 1.5 L5 5 L8.5 1.5 M1.5 7 L5 10.5 L8.5 7" fill="none" stroke="#f0f0f0" stroke-width="1.4"/></svg>
<svg style="position:absolute;left:1583px;top:94px;" width="10" height="14" viewBox="0 0 10 14"><path d="M1.5 1.5 L5 5 L8.5 1.5 M1.5 7 L5 10.5 L8.5 7" fill="none" stroke="#f0f0f0" stroke-width="1.4"/></svg>
<svg style="position:absolute;left:1550px;top:86px;" width="32" height="34" viewBox="0 0 32 34"><g><clipPath id="sc140_150_115"><circle cx="14" cy="15" r="11.5"/></clipPath><g clip-path="url(#sc140_150_115)"><rect x="2.5" y="3.5" width="23.0" height="23.0" fill="#2a62d8"/><path d="M14 15 L19.75 -2.25 L31.25 -2.25 L31.25 19.025 Z" fill="#e03020"/><path d="M14 15 L31.25 19.025 L31.25 32.25 L15.15 32.25 Z" fill="#f0c418"/><path d="M14 15 L15.15 32.25 L-3.25 32.25 L-3.25 20.175 Z" fill="#30b838"/></g><circle cx="14" cy="15" r="11.5" fill="url(#sph)"/></g><g transform="translate(24,22) scale(0.95) rotate(45)"><rect x="-2.2" y="-11" width="4.4" height="13" fill="#f0b020" stroke="#7a5a10" stroke-width=".6"/><rect x="-2.2" y="-13.5" width="4.4" height="3" fill="#e06060" stroke="#7a3030" stroke-width=".5"/><path d="M-2.2 2 L0 6.5 L2.2 2 Z" fill="#f0d8a0" stroke="#7a5a10" stroke-width=".5"/></g></svg>
<svg style="position:absolute;left:1198px;top:189px;" width="18" height="20" viewBox="0 0 18 20"><rect x="1.5" y="2" width="14" height="16" fill="none" stroke="#9a9a9a" stroke-width="1.1"/><path d="M7 7.5 L3.5 10 L7 12.5 Z" fill="#9a9a9a"/></svg>
<svg style="position:absolute;left:1230px;top:189px;" width="18" height="20" viewBox="0 0 18 20"><rect x="1.5" y="2" width="14" height="16" fill="none" stroke="#9a9a9a" stroke-width="1.1"/><path d="M10 7.5 L13.5 10 L10 12.5 Z" fill="#9a9a9a"/></svg>
<div style="position:absolute;left:1264px;top:204px;width:13px;height:2.5px;background:#a4a4a4;"></div>
<svg style="position:absolute;left:1292px;top:189px;" width="22" height="20" viewBox="0 0 22 20"><rect x="2" y="7" width="12" height="10" fill="none" stroke="#9a9a9a" stroke-width="1.3"/><path d="M6.5 7 V3 H19 V13 H14" fill="none" stroke="#9a9a9a" stroke-width="1.3"/></svg>
<svg style="position:absolute;left:1326px;top:191px;" width="17" height="17" viewBox="0 0 17 17"><path d="M2 2 L15 15 M15 2 L2 15" stroke="#9a9a9a" stroke-width="1.5"/></svg>
<svg style="position:absolute;left:609px;top:214px;" width="26" height="26" viewBox="0 0 26 26"><circle cx="15.5" cy="9.5" r="7" fill="#eef2f6" stroke="#8a8a8a" stroke-width="1.2"/><path d="M10.5 15 L3 22.5" stroke="#4a9ad4" stroke-width="3.2" stroke-linecap="round"/><path d="M15.5 5 v9 M11 9.5 h9" stroke="#777" stroke-width="1"/></svg>
<svg style="position:absolute;left:641px;top:214px;" width="26" height="26" viewBox="0 0 26 26"><circle cx="15.5" cy="9.5" r="7" fill="#eef2f6" stroke="#8a8a8a" stroke-width="1.2"/><path d="M10.5 15 L3 22.5" stroke="#4a9ad4" stroke-width="3.2" stroke-linecap="round"/><rect x="8" y="1.5" width="15" height="15" fill="none" stroke="#555" stroke-width="1" stroke-dasharray="2 1.5"/></svg>
<svg style="position:absolute;left:672px;top:214px;" width="28" height="26" viewBox="0 0 28 26"><g transform="rotate(-30 12 14)"><rect x="4" y="9" width="17" height="9" rx="2" fill="#e4e4e4" stroke="#888" stroke-width=".8"/><ellipse cx="5" cy="13.5" rx="2.5" ry="4.5" fill="#f8f8f8" stroke="#888" stroke-width=".8"/></g><path d="M27 16 L19 16 L19 13 L14 18 L19 23 L19 20 L27 20 Z" fill="#4a9ad4" stroke="#2c6fa0" stroke-width=".5"/></svg>
<svg style="position:absolute;left:705px;top:214px;" width="26" height="26" viewBox="0 0 26 26"><path d="M2 8 C2 3 11 3 12 7 L12 24 L2 24 Z" fill="#7ab8dc" stroke="#555" stroke-width=".8"/><path d="M13 7 C15 3 24 3 24 8 L24 22 L13 24 Z" fill="#5a9cc8" stroke="#555" stroke-width=".8"/><path d="M2 8 C5 5 20 4 24 8" fill="#e8e8e8" stroke="#555" stroke-width=".8"/><path d="M3 12 l8 -4 M3 16 l8 -4 M3 20 l8 -4 M14 12 l9 -4 M14 16 l9 -4 M14 20 l9 -4" stroke="#2c6fa0" stroke-width=".8"/></svg>
<svg style="position:absolute;left:736px;top:213px;" width="27" height="28" viewBox="0 0 27 28"><path d="M2 9 L8 2 L25 2 L25 19 L19 26 L2 26 Z" fill="#f4f6f8" stroke="#666" stroke-width=".9"/><rect x="2" y="9" width="17" height="17" fill="#9acce8" stroke="#666" stroke-width=".9"/><path d="M19 9 L25 2" stroke="#666" stroke-width=".9"/><path d="M14 3 v5 M12 6 l2 2.5 l2 -2.5" stroke="#222" stroke-width="1" fill="none"/><path d="M24 14 h-4 M22 12 l-2.5 2 l2.5 2" stroke="#222" stroke-width="1" fill="none"/></svg>
<svg style="position:absolute;left:781px;top:214px;" width="25" height="26" viewBox="0 0 25 26"><path d="M2 6 L8 2 L23 2 L23 20 L17 25 L2 23 Z" fill="#fff" stroke="#777" stroke-width=".8"/><path d="M2 6 L12 8 L12 25 L2 23 Z" fill="#7ab8dc" stroke="#555" stroke-width=".7"/><path d="M12 8 L23 4 L23 20 L12 25 Z" fill="#f4f4f4" stroke="#777" stroke-width=".7"/><path d="M2 6 L8 2 L23 4 L12 8 Z" fill="#c4e0f0" stroke="#777" stroke-width=".7"/></svg>
<svg style="position:absolute;left:823px;top:217px;" width="28" height="20" viewBox="0 0 28 20"><path d="M1.5 10 C7 1.5 21 1.5 26.5 10 C21 18.5 7 18.5 1.5 10 Z" fill="#f4f4f4" stroke="#8a8a8a" stroke-width="1.3"/><circle cx="14" cy="10" r="5.6" fill="#7a7a7a"/><path d="M14 2 L14 18 C8 18 8 2 14 2 Z" fill="#3a3a3a"/><rect x="13.3" y="0" width="1.6" height="20" fill="#555"/></svg>
<svg style="position:absolute;left:867px;top:212px;" width="30" height="32" viewBox="0 0 30 32"><g><clipPath id="sc130_135_115"><circle cx="13" cy="13.5" r="11.5"/></clipPath><g clip-path="url(#sc130_135_115)"><rect x="1.5" y="2.0" width="23.0" height="23.0" fill="#2a62d8"/><path d="M13 13.5 L18.75 -3.75 L30.25 -3.75 L30.25 17.525 Z" fill="#e03020"/><path d="M13 13.5 L30.25 17.525 L30.25 30.75 L14.15 30.75 Z" fill="#f0c418"/><path d="M13 13.5 L14.15 30.75 L-4.25 30.75 L-4.25 18.675 Z" fill="#30b838"/></g><circle cx="13" cy="13.5" r="11.5" fill="url(#sph)"/></g><g transform="translate(22,22) scale(0.9) rotate(45)"><rect x="-2.2" y="-11" width="4.4" height="13" fill="#f0b020" stroke="#7a5a10" stroke-width=".6"/><rect x="-2.2" y="-13.5" width="4.4" height="3" fill="#e06060" stroke="#7a3030" stroke-width=".5"/><path d="M-2.2 2 L0 6.5 L2.2 2 Z" fill="#f0d8a0" stroke="#7a5a10" stroke-width=".5"/></g></svg>
<svg style="position:absolute;left:899px;top:212px;" width="30" height="32" viewBox="0 0 30 32"><g><clipPath id="sc145_120_105"><circle cx="14.5" cy="12" r="10.5"/></clipPath><g clip-path="url(#sc145_120_105)"><rect x="4.0" y="1.5" width="21.0" height="21.0" fill="#2a62d8"/><path d="M14.5 12 L19.75 -3.75 L30.25 -3.75 L30.25 15.675 Z" fill="#e03020"/><path d="M14.5 12 L30.25 15.675 L30.25 27.75 L15.55 27.75 Z" fill="#f0c418"/><path d="M14.5 12 L15.55 27.75 L-1.25 27.75 L-1.25 16.725 Z" fill="#30b838"/></g><circle cx="14.5" cy="12" r="10.5" fill="url(#sph)"/></g><g transform="translate(2,19)"><rect x="0.0" y="0.0" width="3.2" height="3.2" fill="#111"/><rect x="0.0" y="3.2" width="3.2" height="3.2" fill="#f4f4f4"/><rect x="0.0" y="6.4" width="3.2" height="3.2" fill="#111"/><rect x="3.2" y="0.0" width="3.2" height="3.2" fill="#f4f4f4"/><rect x="3.2" y="3.2" width="3.2" height="3.2" fill="#111"/><rect x="3.2" y="6.4" width="3.2" height="3.2" fill="#f4f4f4"/><rect x="6.4" y="0.0" width="3.2" height="3.2" fill="#111"/><rect x="6.4" y="3.2" width="3.2" height="3.2" fill="#f4f4f4"/><rect x="6.4" y="6.4" width="3.2" height="3.2" fill="#111"/><rect x="9.600000000000001" y="0.0" width="3.2" height="3.2" fill="#f4f4f4"/><rect x="9.600000000000001" y="3.2" width="3.2" height="3.2" fill="#111"/><rect x="9.600000000000001" y="6.4" width="3.2" height="3.2" fill="#f4f4f4"/><rect x="12.8" y="0.0" width="3.2" height="3.2" fill="#111"/><rect x="12.8" y="3.2" width="3.2" height="3.2" fill="#f4f4f4"/><rect x="12.8" y="6.4" width="3.2" height="3.2" fill="#111"/><rect x="16.0" y="0.0" width="3.2" height="3.2" fill="#f4f4f4"/><rect x="16.0" y="3.2" width="3.2" height="3.2" fill="#111"/><rect x="16.0" y="6.4" width="3.2" height="3.2" fill="#f4f4f4"/><rect x="19.200000000000003" y="0.0" width="3.2" height="3.2" fill="#111"/><rect x="19.200000000000003" y="3.2" width="3.2" height="3.2" fill="#f4f4f4"/><rect x="19.200000000000003" y="6.4" width="3.2" height="3.2" fill="#111"/><rect x="22.400000000000002" y="0.0" width="3.2" height="3.2" fill="#f4f4f4"/><rect x="22.400000000000002" y="3.2" width="3.2" height="3.2" fill="#111"/><rect x="22.400000000000002" y="6.4" width="3.2" height="3.2" fill="#f4f4f4"/></g></svg>
<svg style="position:absolute;left:946px;top:215px;" width="26" height="24" viewBox="0 0 26 24"><rect x="1.5" y="1.5" width="22" height="15" fill="#d8d8d8" stroke="#555" stroke-width="1.6"/><rect x="10.5" y="17" width="4" height="3.5" fill="#555"/><rect x="6.5" y="20" width="12" height="1.8" fill="#555"/></svg>
<div class="dd" style="left:764px;top:225px;border-top-color:#8a8a8a;border-left-width:3.5px;border-right-width:3.5px"></div>
<div class="dd" style="left:810px;top:225px;border-top-color:#8a8a8a;border-left-width:3.5px;border-right-width:3.5px"></div>
<div class="dd" style="left:854px;top:225px;border-top-color:#8a8a8a;border-left-width:3.5px;border-right-width:3.5px"></div>
<div class="dd" style="left:930px;top:225px;border-top-color:#8a8a8a;border-left-width:3.5px;border-right-width:3.5px"></div>
<div class="dd" style="left:975px;top:225px;border-top-color:#8a8a8a;border-left-width:3.5px;border-right-width:3.5px"></div>
<svg style="position:absolute;left:2px;top:241px;" width="32" height="28" viewBox="0 0 32 28"><g transform="translate(3,1.5) scale(1.12)"><path d="M1.5 5.5 L8 2 L13.5 4.5 L13.5 9.5 L15.5 8.5 L20.5 11 L20.5 17 L10.5 22.5 L1.5 17.5 Z" fill="#f0c420" stroke="#fff0a0" stroke-width="1.1" stroke-linejoin="round"/><path d="M1.5 5.5 L7.5 8.5 L13.5 4.5 M7.5 8.5 L7.5 13 L10.5 15 L20.5 11 M10.5 15 L10.5 22.5 M7.5 13 L13.5 9.5" fill="none" stroke="#202020" stroke-width=".7" opacity=".4"/></g><path d="M4.7 7.7 L11.4 11 L18 6.5" fill="none" stroke="#a07800" stroke-width=".8" opacity=".6"/></svg>
<svg style="position:absolute;left:46px;top:243px;" width="26" height="25" viewBox="0 0 26 25"><rect x="1" y="1" width="24" height="22" fill="#f4f4f4" stroke="#c8c8c8" stroke-width=".5"/><rect x="1" y="1" width="24" height="4" fill="#3b8fc4"/><rect x="3.5" y="8" width="5" height="3.2" fill="#3b8fc4"/><rect x="10.5" y="8.7" width="12" height="1.8" fill="#666"/><rect x="3.5" y="13" width="5" height="3.2" fill="#3b8fc4"/><rect x="10.5" y="13.7" width="12" height="1.8" fill="#666"/><rect x="3.5" y="18" width="5" height="3.2" fill="#3b8fc4"/><rect x="10.5" y="18.7" width="12" height="1.8" fill="#666"/></svg>
<svg style="position:absolute;left:90px;top:242px;" width="24" height="26" viewBox="0 0 24 26"><path d="M4.5 2 V22 M4.5 7.5 H11 M4.5 19 H13" stroke="#f0f0f0" stroke-width="1.6" fill="none"/><rect x="10" y="2.5" width="8.5" height="8.5" fill="#f4f4f4" stroke="#bdbdbd" stroke-width=".6"/><rect x="12.5" y="13.5" width="9" height="9" fill="#f4f4f4" stroke="#bdbdbd" stroke-width=".6"/></svg>
<svg style="position:absolute;left:131px;top:241px;" width="28" height="28" viewBox="0 0 28 28"><g fill="none" stroke="#9a9a9a" stroke-width="1.6"><circle cx="14" cy="14" r="10"/><circle cx="14" cy="14" r="5.5"/><path d="M14 1 V27 M1 14 H27"/></g></svg>
<svg style="position:absolute;left:175px;top:241px;" width="27" height="28" viewBox="0 0 27 28"><g><clipPath id="sc130_140_115"><circle cx="13" cy="14" r="11.5"/></clipPath><g clip-path="url(#sc130_140_115)"><rect x="1.5" y="2.5" width="23.0" height="23.0" fill="#2a62d8"/><path d="M13 14 L18.75 -3.25 L30.25 -3.25 L30.25 18.025 Z" fill="#e03020"/><path d="M13 14 L30.25 18.025 L30.25 31.25 L14.15 31.25 Z" fill="#f0c418"/><path d="M13 14 L14.15 31.25 L-4.25 31.25 L-4.25 19.175 Z" fill="#30b838"/></g><circle cx="13" cy="14" r="11.5" fill="url(#sph)"/></g><ellipse cx="17.5" cy="8" rx="4.5" ry="6" fill="#1a1010" transform="rotate(-35 17.5 8)"/><circle cx="13" cy="14" r="11.5" fill="url(#sph)"/></svg>
<svg style="position:absolute;left:219px;top:247px;" width="12" height="18" viewBox="0 0 12 18"><path d="M2.5 2 L9.5 9 L2.5 16" fill="none" stroke="#1e1e1e" stroke-width="2.4"/></svg>
<svg style="position:absolute;left:1px;top:275px;" width="22" height="24" viewBox="0 0 22 24"><path d="M1 4 L21 4 L12.5 13 L12.5 22 L9.5 20 L9.5 13 Z" fill="#f0f0f0" stroke="#bdbdbd" stroke-width=".6"/><ellipse cx="11" cy="3.8" rx="10.3" ry="3" fill="#58b8d8" stroke="#2c8cb0" stroke-width=".7"/></svg>
<svg style="position:absolute;left:1px;top:415px;" width="22" height="24" viewBox="0 0 22 24"><path d="M1 4 L21 4 L12.5 13 L12.5 22 L9.5 20 L9.5 13 Z" fill="#f0f0f0" stroke="#bdbdbd" stroke-width=".6"/><ellipse cx="11" cy="3.8" rx="10.3" ry="3" fill="#58b8d8" stroke="#2c8cb0" stroke-width=".7"/></svg>
<div class="dd" style="left:21px;top:432px;border-left-width:3px;border-right-width:3px;border-top-width:3.5px"></div>
<svg style="position:absolute;left:26px;top:304px;" width="26" height="26" viewBox="0 0 26 26"><path d="M2 8 L9 5 L19 8 L19 21 L10 24.5 L2 21 Z" fill="#f2f2f2" stroke="#d0d0d0" stroke-width=".6"/><path d="M2 8 L10 11 L19 8 M10 11 L10 24.5" fill="none" stroke="#b0b0b0" stroke-width=".7"/><ellipse cx="10.5" cy="16" rx="5.2" ry="4.2" fill="#4aa8d8" stroke="#1d6a98" stroke-width=".8"/><path d="M6 15 C8 12 13 12 15 15" fill="#1d4a70"/><path d="M11 5 L23 16" stroke="#1a1a1a" stroke-width="3.2" stroke-linecap="round"/><path d="M11 5 L13 7" stroke="#f0f0f0" stroke-width="3.2" stroke-linecap="round"/><path d="M7 1 l1 2.5 l2.5 1 l-2.5 1 l-1 2.5 l-1 -2.5 l-2.5 -1 l2.5 -1 Z" fill="#f0b020"/><circle cx="14" cy="2.5" r="1.2" fill="#f0b020"/><circle cx="17" cy="6" r="1" fill="#f0b020"/></svg>
<svg style="position:absolute;left:26px;top:331px;" width="26" height="26" viewBox="0 0 26 26"><path d="M2 8 L9 5 L19 8 L19 21 L10 24.5 L2 21 Z" fill="#f2f2f2" stroke="#d0d0d0" stroke-width=".6"/><path d="M2 8 L10 11 L19 8 M10 11 L10 24.5" fill="none" stroke="#b0b0b0" stroke-width=".7"/><ellipse cx="10.5" cy="16" rx="5.2" ry="4.2" fill="#4aa8d8" stroke="#1d6a98" stroke-width=".8"/><path d="M6 15 C8 12 13 12 15 15" fill="#1d4a70"/><path d="M11 5 L23 16" stroke="#1a1a1a" stroke-width="3.2" stroke-linecap="round"/><path d="M11 5 L13 7" stroke="#f0f0f0" stroke-width="3.2" stroke-linecap="round"/><path d="M7 1 l1 2.5 l2.5 1 l-2.5 1 l-1 2.5 l-1 -2.5 l-2.5 -1 l2.5 -1 Z" fill="#f0b020"/><circle cx="14" cy="2.5" r="1.2" fill="#f0b020"/><circle cx="17" cy="6" r="1" fill="#f0b020"/></svg>
<div style="position:absolute;left:0;top:358px;width:217px;height:15px;overflow:hidden">
<svg style="position:absolute;left:27px;top:2px;" width="24" height="24" viewBox="0 0 24 24"><path d="M2 4 L16 1 L21 4 L21 22 L6 22 L2 19 Z" fill="#f0f0f0" stroke="#d0d0d0" stroke-width=".6"/><path d="M6 8 C10 4 16 3 21 4 L21 12 C16 10 10 12 6 16 Z" fill="#4aa8d8" stroke="#1d6a98" stroke-width=".6"/></svg>
</div>
<svg style="position:absolute;left:23px;top:444px;" width="28" height="28" viewBox="0 0 28 28"><path d="M2 19 L13 17 L25 20 L13 24 Z" fill="#9a9a9a"/><path d="M3 21 l2 3 M7 22 l2 3 M11 23 l2 3 M15 22.5 l2 3 M19 21 l2 3" stroke="#d0d0d0" stroke-width="1.2"/><path d="M5 6 L11 2.5 L16 4.5 L16 9.5 L22 12 L22 18 L13 22 L5 18 Z" fill="#e4e4e4" stroke="#fafafa" stroke-width=".9"/><path d="M5 6 L10.5 8.5 L16 4.5 M10.5 8.5 L10.5 14 L13 15.5 L22 12 M13 15.5 L13 22" fill="none" stroke="#8a8a8a" stroke-width=".8"/></svg>
<svg style="position:absolute;left:51px;top:471px;" width="28" height="28" viewBox="0 0 28 28"><g fill="none" stroke="#cfe6f4" stroke-width="4.2" stroke-linecap="round"><circle cx="19" cy="5.5" r="2.8"/><path d="M17 7.5 L8 20"/><path d="M9.5 9 L19 15.5"/><path d="M2.5 12 C1 20 6 24.5 11 24 C17 23.5 21.5 20 22.5 16"/></g><g fill="none" stroke="#2f7fb5" stroke-width="2.5" stroke-linecap="round"><circle cx="19" cy="5.5" r="2.8"/><path d="M17 7.5 L8 20"/><path d="M9.5 9 L19 15.5"/><path d="M2.5 12 C1 20 6 24.5 11 24 C17 23.5 21.5 20 22.5 16"/></g><path d="M0.5 9 L6.5 12.5 L1.5 16 Z M19 13 L25.5 15 L22 20.5 Z" fill="#2f7fb5" stroke="#cfe6f4" stroke-width=".7"/></svg>
<svg style="position:absolute;left:23px;top:497px;" width="28" height="28" viewBox="0 0 28 28"><path d="M6.5 2 L12 2 L12 13 L16.5 13 L9.2 21 L2 13 L6.5 13 Z" fill="#2f7fb5" stroke="#b8dcf0" stroke-width=".9"/><rect x="1.5" y="22.5" width="16" height="2" fill="#d8d8d8"/><rect x="20" y="3" width="2.2" height="12" fill="#e8e8e8" stroke="#222" stroke-width=".5"/><path d="M20 6 h2 M20 9 h2" stroke="#c02020" stroke-width=".8"/><circle cx="21.2" cy="19" r="4.2" fill="#4a9ad4" stroke="#1d5a86" stroke-width=".7"/></svg>
<svg style="position:absolute;left:52px;top:524px;" width="28" height="28" viewBox="0 0 28 28"><path d="M10.5 2 L16.5 2 L16.5 13 L21.5 13 L13.5 22 L5.5 13 L10.5 13 Z" fill="#2f7fb5" stroke="#b8dcf0" stroke-width=".9"/><rect x="3.5" y="23.5" width="20" height="2" fill="#d8d8d8"/></svg>
<svg style="position:absolute;left:23px;top:550px;" width="28" height="28" viewBox="0 0 28 28"><path d="M3 10 L13 6 L23 10 L23 20 L13 25 L3 20 Z" fill="#ececec" stroke="#555" stroke-width=".7"/><path d="M3 10 L13 14 L23 10 M13 14 L13 25 M3 13.5 L13 17.5 L23 13.5 M3 17 L13 21 L23 17 M6.3 11.4 L6.3 21.6 M9.6 12.7 L9.6 23.3 M16.3 12.7 L16.3 23.3 M19.6 11.4 L19.6 21.6 M6.3 8.7 L16.3 12.7 M9.6 7.4 L19.6 11.4" fill="none" stroke="#555" stroke-width=".6"/><path d="M10 7 L14 11 L24 1.5" fill="none" stroke="#1c8a2c" stroke-width="3"/></svg>
<svg style="position:absolute;left:52px;top:578px;" width="28" height="28" viewBox="0 0 28 28"><path d="M1.5 4 L9 4 L11 6.5 L25 6.5 L25 24 L1.5 24 Z" fill="#e8e8e8" stroke="#fafafa" stroke-width=".8"/><path d="M1.5 8.5 L25 8.5" stroke="#bdbdbd" stroke-width=".6"/><g transform="translate(6.5,8) scale(0.68)"><path d="M1.5 5.5 L8 2 L13.5 4.5 L13.5 9.5 L15.5 8.5 L20.5 11 L20.5 17 L10.5 22.5 L1.5 17.5 Z" fill="url(#rbv)" stroke="#333" stroke-width="1.1" stroke-linejoin="round"/><path d="M1.5 5.5 L7.5 8.5 L13.5 4.5 M7.5 8.5 L7.5 13 L10.5 15 L20.5 11 M10.5 15 L10.5 22.5 M7.5 13 L13.5 9.5" fill="none" stroke="#202020" stroke-width=".7" opacity=".4"/></g></svg>
<svg style="position:absolute;left:52px;top:605px;" width="28" height="28" viewBox="0 0 28 28"><rect x="1.5" y="1.5" width="22" height="22" fill="#e8e8e8" stroke="#fafafa" stroke-width=".8"/><path d="M1.5 1.5 L12 8 L23.5 1.5 M12 8 L1.5 14 L10 23.5 M12 8 L17 15 L23.5 9 M17 15 L10 23.5 M17 15 L23.5 23.5 M1.5 14 L17 15 M6 5 L6 11 M12 8 L9 16" fill="none" stroke="#555" stroke-width=".8"/><circle cx="23.5" cy="24" r="2" fill="#3b8fc4"/></svg>
<svg style="position:absolute;left:23px;top:632px;" width="28" height="28" viewBox="0 0 28 28"><rect x="1.5" y="1.5" width="24" height="24" rx="2.5" fill="#f0f0f0" stroke="#bdbdbd" stroke-width=".8"/><circle cx="6.5" cy="7.0" r="2.1" fill="#e8e8e8" stroke="#777" stroke-width=".6"/><rect x="11" y="6.2" width="11" height="1.6" fill="#8a8a8a"/><circle cx="6.5" cy="13.5" r="2.1" fill="#e8e8e8" stroke="#777" stroke-width=".6"/><rect x="11" y="12.7" width="11" height="1.6" fill="#8a8a8a"/><circle cx="6.5" cy="20.0" r="2.1" fill="#2c7fb8" stroke="#777" stroke-width=".6"/><rect x="11" y="19.2" width="11" height="1.6" fill="#8a8a8a"/></svg>
<svg style="position:absolute;left:23px;top:659px;" width="28" height="28" viewBox="0 0 28 28"><path d="M1.5 3 L9 3 L11 5.5 L25 5.5 L25 24 L1.5 24 Z" fill="#e8e8e8" stroke="#fafafa" stroke-width=".8"/><path d="M1.5 7.5 L25 7.5" stroke="#bdbdbd" stroke-width=".6"/><g transform="translate(6,7.5) scale(0.7)"><path d="M1.5 5.5 L8 2 L13.5 4.5 L13.5 9.5 L15.5 8.5 L20.5 11 L20.5 17 L10.5 22.5 L1.5 17.5 Z" fill="url(#rbv)" stroke="#333" stroke-width="1.1" stroke-linejoin="round"/><path d="M1.5 5.5 L7.5 8.5 L13.5 4.5 M7.5 8.5 L7.5 13 L10.5 15 L20.5 11 M10.5 15 L10.5 22.5 M7.5 13 L13.5 9.5" fill="none" stroke="#202020" stroke-width=".7" opacity=".4"/></g></svg>
<svg style="position:absolute;left:52px;top:686px;" width="28" height="28" viewBox="0 0 28 28"><g transform="translate(0.5,1.5) scale(1.08)"><path d="M1.5 5.5 L8 2 L13.5 4.5 L13.5 9.5 L15.5 8.5 L20.5 11 L20.5 17 L10.5 22.5 L1.5 17.5 Z" fill="url(#rbv)" stroke="#f0f0f0" stroke-width="1.1" stroke-linejoin="round"/><path d="M1.5 5.5 L7.5 8.5 L13.5 4.5 M7.5 8.5 L7.5 13 L10.5 15 L20.5 11 M10.5 15 L10.5 22.5 M7.5 13 L13.5 9.5" fill="none" stroke="#202020" stroke-width=".7" opacity=".4"/></g></svg>
<span class="t" style="left:71.0px;top:687.1px;font-size:11px;color:#f4f4f4;font-weight:700;">σ</span>
<svg style="position:absolute;left:52px;top:713px;" width="28" height="28" viewBox="0 0 28 28"><g transform="translate(0.5,1.5) scale(1.08)"><path d="M1.5 5.5 L8 2 L13.5 4.5 L13.5 9.5 L15.5 8.5 L20.5 11 L20.5 17 L10.5 22.5 L1.5 17.5 Z" fill="url(#rbv)" stroke="#f0f0f0" stroke-width="1.1" stroke-linejoin="round"/><path d="M1.5 5.5 L7.5 8.5 L13.5 4.5 M7.5 8.5 L7.5 13 L10.5 15 L20.5 11 M10.5 15 L10.5 22.5 M7.5 13 L13.5 9.5" fill="none" stroke="#202020" stroke-width=".7" opacity=".4"/></g></svg>
<span class="t" style="left:71.0px;top:714.1px;font-size:11px;color:#f4f4f4;font-weight:700;">u</span>
<svg style="position:absolute;left:52px;top:740px;" width="28" height="28" viewBox="0 0 28 28"><g transform="translate(0.5,1.5) scale(1.08)"><path d="M1.5 5.5 L8 2 L13.5 4.5 L13.5 9.5 L15.5 8.5 L20.5 11 L20.5 17 L10.5 22.5 L1.5 17.5 Z" fill="url(#rbv)" stroke="#f0f0f0" stroke-width="1.1" stroke-linejoin="round"/><path d="M1.5 5.5 L7.5 8.5 L13.5 4.5 M7.5 8.5 L7.5 13 L10.5 15 L20.5 11 M10.5 15 L10.5 22.5 M7.5 13 L13.5 9.5" fill="none" stroke="#202020" stroke-width=".7" opacity=".4"/></g></svg>
<span class="t" style="left:71.0px;top:741.1px;font-size:11px;color:#f4f4f4;font-weight:700;">ε</span>
<svg style="position:absolute;left:52px;top:767px;" width="28" height="28" viewBox="0 0 28 28"><g transform="translate(0.5,1.5) scale(1.08)"><path d="M1.5 5.5 L8 2 L13.5 4.5 L13.5 9.5 L15.5 8.5 L20.5 11 L20.5 17 L10.5 22.5 L1.5 17.5 Z" fill="url(#rbv)" stroke="#f0f0f0" stroke-width="1.1" stroke-linejoin="round"/><path d="M1.5 5.5 L7.5 8.5 L13.5 4.5 M7.5 8.5 L7.5 13 L10.5 15 L20.5 11 M10.5 15 L10.5 22.5 M7.5 13 L13.5 9.5" fill="none" stroke="#202020" stroke-width=".7" opacity=".4"/></g></svg>
<div style="position:absolute;left:73.5px;top:768px;width:3.5px;height:14px;background:linear-gradient(180deg,#ff2010,#ffd800 35%,#20d020 65%,#1040e0);border:1px solid #f0f0f0"></div>
<svg style="position:absolute;left:17px;top:801px;" width="19" height="20" viewBox="0 0 19 20"><rect x="4.5" y="5" width="1.8" height="10" fill="#8c8c9a"/><path d="M14 5 L7.5 10 L14 15 Z" fill="#8c8c9a"/></svg>
<svg style="position:absolute;left:37px;top:801px;" width="19" height="20" viewBox="0 0 19 20"><path d="M13 5 L6.5 10 L13 15 Z" fill="#8c8c9a"/></svg>
<svg style="position:absolute;left:57px;top:801px;" width="19" height="20" viewBox="0 0 19 20"><path d="M6.5 5 L13 10 L6.5 15 Z" fill="#8c8c9a"/></svg>
<svg style="position:absolute;left:77px;top:801px;" width="19" height="20" viewBox="0 0 19 20"><rect x="13" y="5" width="1.8" height="10" fill="#8c8c9a"/><path d="M5.5 5 L12 10 L5.5 15 Z" fill="#8c8c9a"/></svg>
<svg style="position:absolute;left:312px;top:802px;" width="10" height="10" viewBox="0 0 10 10"><path d="M3 1 L5 4 L8 4.5 L5.5 6.5 L6 9 L3 7 Z" fill="#25405a"/></svg>
<svg style="position:absolute;left:400px;top:802px;" width="10" height="10" viewBox="0 0 10 10"><path d="M3 1 L5 4 L8 4.5 L5.5 6.5 L6 9 L3 7 Z" fill="#25405a"/></svg>
<svg style="position:absolute;left:597px;top:802px;" width="10" height="10" viewBox="0 0 10 10"><path d="M3 1 L5 4 L8 4.5 L5.5 6.5 L6 9 L3 7 Z" fill="#25405a"/></svg>
<svg style="position:absolute;left:1366px;top:188px;" width="18" height="17" viewBox="0 0 18 17"><path d="M8 2.5 L2.5 8.5 L8 14.5 M15 2.5 L9.5 8.5 L15 14.5" fill="none" stroke="#1e1e1e" stroke-width="2.2"/></svg>
<svg style="position:absolute;left:1546px;top:184px;" width="24" height="24" viewBox="0 0 24 24"><g transform="translate(12,12)"><rect x="-2.3" y="-11.3" width="4.6" height="6" fill="#fff" stroke="#222" stroke-width="1" transform="rotate(0)"/><rect x="-2.3" y="-11.3" width="4.6" height="6" fill="#fff" stroke="#222" stroke-width="1" transform="rotate(45)"/><rect x="-2.3" y="-11.3" width="4.6" height="6" fill="#fff" stroke="#222" stroke-width="1" transform="rotate(90)"/><rect x="-2.3" y="-11.3" width="4.6" height="6" fill="#fff" stroke="#222" stroke-width="1" transform="rotate(135)"/><rect x="-2.3" y="-11.3" width="4.6" height="6" fill="#fff" stroke="#222" stroke-width="1" transform="rotate(180)"/><rect x="-2.3" y="-11.3" width="4.6" height="6" fill="#fff" stroke="#222" stroke-width="1" transform="rotate(225)"/><rect x="-2.3" y="-11.3" width="4.6" height="6" fill="#fff" stroke="#222" stroke-width="1" transform="rotate(270)"/><rect x="-2.3" y="-11.3" width="4.6" height="6" fill="#fff" stroke="#222" stroke-width="1" transform="rotate(315)"/><circle r="7.6" fill="#fff" stroke="#222" stroke-width="1"/><rect x="-1.8" y="-10.8" width="3.6" height="5" fill="#fff" transform="rotate(0)"/><rect x="-1.8" y="-10.8" width="3.6" height="5" fill="#fff" transform="rotate(45)"/><rect x="-1.8" y="-10.8" width="3.6" height="5" fill="#fff" transform="rotate(90)"/><rect x="-1.8" y="-10.8" width="3.6" height="5" fill="#fff" transform="rotate(135)"/><rect x="-1.8" y="-10.8" width="3.6" height="5" fill="#fff" transform="rotate(180)"/><rect x="-1.8" y="-10.8" width="3.6" height="5" fill="#fff" transform="rotate(225)"/><rect x="-1.8" y="-10.8" width="3.6" height="5" fill="#fff" transform="rotate(270)"/><rect x="-1.8" y="-10.8" width="3.6" height="5" fill="#fff" transform="rotate(315)"/><circle r="3.6" fill="#acacac" stroke="#222" stroke-width="1"/></g></svg>
<svg style="position:absolute;left:1574px;top:185px;" width="22" height="22" viewBox="0 0 22 22"><g transform="rotate(40 11 11)" fill="#1e1e1e"><path d="M7 1.5 H15 V3.6 H13.6 V9 L16.5 12.2 V13.6 H5.5 V12.2 L8.4 9 V3.6 H7 Z"/><rect x="10.2" y="13" width="1.6" height="8"/></g></svg>
<svg style="position:absolute;left:1369px;top:249px;" width="17" height="17" viewBox="0 0 17 17"><path d="M3.5 8 L3.5 15 L13.5 15 L13.5 8 L8.5 3.5 Z" fill="#f4f4f4"/><path d="M1.5 8.7 L8.5 2.2 L15.5 8.7" fill="none" stroke="#3b8fc4" stroke-width="1.8"/><rect x="7" y="9.5" width="3.6" height="5.5" fill="#4a4a4a"/><rect x="7.9" y="10.4" width="1.8" height="4.6" fill="#f4f4f4"/></svg>
<svg style="position:absolute;left:1369px;top:325px;" width="19" height="19" viewBox="0 0 19 19"><path d="M1 4.5 L7 1.5 L13.5 3.5 L13.5 11 L7.5 14.5 L1 11.5 Z" fill="#d82828" stroke="#f0b0b0" stroke-width=".5"/><path d="M1 4.5 L7.5 7 L13.5 3.5 M7.5 7 L7.5 14.5" fill="none" stroke="#8a1010" stroke-width=".6"/><text x="2" y="11" font-size="5.5" font-weight="700" fill="#fff" font-family="Liberation Sans,sans-serif">S</text><rect x="10" y="9.5" width="8" height="8" fill="#f0f0f0" stroke="#333" stroke-width=".6"/><path d="M10 12 h8 M10 14.7 h8 M14 12 v5.5" stroke="#333" stroke-width=".6"/></svg>
<svg style="position:absolute;left:1369px;top:355px;" width="19" height="19" viewBox="0 0 19 19"><path d="M1 4.5 L7 1.5 L13.5 3.5 L13.5 11 L7.5 14.5 L1 11.5 Z" fill="#d82828" stroke="#f0b0b0" stroke-width=".5"/><path d="M1 4.5 L7.5 7 L13.5 3.5 M7.5 7 L7.5 14.5" fill="none" stroke="#8a1010" stroke-width=".6"/><text x="2" y="11" font-size="5.5" font-weight="700" fill="#fff" font-family="Liberation Sans,sans-serif">S</text><rect x="9.5" y="9" width="9" height="9" fill="#f4f4f4" stroke="#333" stroke-width=".7"/><text x="10.3" y="16.3" font-size="6.5" font-weight="700" fill="#222" font-family="Liberation Sans,sans-serif">Rx</text></svg>
<svg style="position:absolute;left:1369px;top:385px;" width="19" height="19" viewBox="0 0 19 19"><path d="M1 4.5 L7 1.5 L13.5 3.5 L13.5 11 L7.5 14.5 L1 11.5 Z" fill="#d82828" stroke="#f0b0b0" stroke-width=".5"/><path d="M1 4.5 L7.5 7 L13.5 3.5 M7.5 7 L7.5 14.5" fill="none" stroke="#8a1010" stroke-width=".6"/><text x="2" y="11" font-size="5.5" font-weight="700" fill="#fff" font-family="Liberation Sans,sans-serif">S</text><rect x="9.5" y="9" width="9" height="9" fill="#f4f4f4" stroke="#333" stroke-width=".7"/><text x="10.3" y="16.3" font-size="6.5" font-weight="700" fill="#222" font-family="Liberation Sans,sans-serif">Rx</text></svg>
<svg style="position:absolute;left:1370px;top:415px;" width="18" height="18" viewBox="0 0 18 18"><rect x="1" y="1" width="15.5" height="15.5" rx="2" fill="#3b8fc4" stroke="#a8d4ec" stroke-width=".8"/><path d="M3.5 8.7 C6 5 11.5 5 14 8.7 C11.5 12.4 6 12.4 3.5 8.7 Z" fill="none" stroke="#fff" stroke-width="1.2"/><circle cx="8.7" cy="8.7" r="2" fill="#fff"/></svg>
<svg style="position:absolute;left:1369px;top:444px;" width="20" height="20" viewBox="0 0 20 20"><path d="M2 3 L12 3 L12 6 L2 6 Z" fill="none" stroke="#e0e0e0" stroke-width=".8" stroke-dasharray="1.2 .8"/><path d="M4 5 L9 14 M9 5 L4 14" stroke="#3b8fc4" stroke-width="1.8"/><path d="M6.5 6 L6.5 16" stroke="#f0f0f0" stroke-width="1.2"/><rect x="9.5" y="9.5" width="9" height="9" rx="1" fill="#d82828" stroke="#f0b0b0" stroke-width=".5"/><text x="10.3" y="16.5" font-size="6" font-weight="700" fill="#fff" font-family="Liberation Sans,sans-serif">SW</text></svg>
<svg style="position:absolute;left:1369px;top:475px;" width="20" height="20" viewBox="0 0 20 20"><path d="M1 3.5 L6 1 L11 2.8 L11 8 L6 11 L1 8.5 Z" fill="#d82828" stroke="#f0b0b0" stroke-width=".5"/><text x="1.6" y="8" font-size="4.8" font-weight="700" fill="#fff" font-family="Liberation Sans,sans-serif">SW</text><rect x="6" y="7" width="9" height="10" fill="#f0f0f0" stroke="#555" stroke-width=".6"/><path d="M7.5 10 l1.2 1.2 l2 -2.2 M7.5 14 l1.2 1.2 l2 -2.2" stroke="#1c8a2c" stroke-width="1" fill="none"/><circle cx="15.5" cy="13" r="2" fill="#c8c8c8"/><path d="M12 19 C12 15.5 19 15.5 19 19 Z" fill="#c8c8c8"/></svg>
<svg style="position:absolute;left:1369px;top:553px;" width="20" height="20" viewBox="0 0 20 20"><circle cx="10" cy="10" r="8.8" fill="#2c78b4" stroke="#7ab8dc" stroke-width=".8"/><path d="M5 6 C8 3 13 4 15 7 M4 12 C6 16 12 17 15 13" fill="none" stroke="#a8d4ec" stroke-width="1.3"/><path d="M8 7 L13 10 L8 13 Z" fill="#e8f4fc"/></svg>
<svg style="position:absolute;left:1369px;top:585px;" width="20" height="14" viewBox="0 0 20 14"><path d="M1 3 L6 2 L10 4.5 L14 2 L19 3.5 L15.5 9 L11 11.5 L7 11 L4 8.5 Z" fill="#d8d8d8" stroke="#f4f4f4" stroke-width=".5"/><path d="M6 6 L10 9.5 L13 7.5" fill="none" stroke="#666" stroke-width=".9"/></svg>
<svg style="position:absolute;left:1369px;top:663px;" width="20" height="20" viewBox="0 0 20 20"><circle cx="8" cy="8" r="6.5" fill="#3b8fc4" stroke="#e8e8e8" stroke-width=".8"/><path d="M3 6 C6 4 9 9 13 6 M3 11 C6 9 9 13 13 10" fill="none" stroke="#e8f4fc" stroke-width="1"/><circle cx="12.5" cy="12.5" r="6" fill="#d82828" stroke="#f0b0b0" stroke-width=".5"/><text x="8.3" y="15" font-size="6" font-weight="700" fill="#fff" font-family="Liberation Sans,sans-serif">SW</text></svg>
<svg style="position:absolute;left:1553px;top:303px;" width="14" height="12" viewBox="0 0 14 12"><path d="M2 6 L7 2 L12 6 M2 10 L7 6 L12 10" fill="none" stroke="#9a9a9a" stroke-width="1.5"/></svg>
<svg style="position:absolute;left:1553px;top:532px;" width="14" height="12" viewBox="0 0 14 12"><path d="M2 6 L7 2 L12 6 M2 10 L7 6 L12 10" fill="none" stroke="#9a9a9a" stroke-width="1.5"/></svg>
<svg style="position:absolute;left:1553px;top:641px;" width="14" height="12" viewBox="0 0 14 12"><path d="M2 6 L7 2 L12 6 M2 10 L7 6 L12 10" fill="none" stroke="#9a9a9a" stroke-width="1.5"/></svg>
<svg style="position:absolute;left:1324px;top:266px;" width="31" height="29" viewBox="0 0 31 29"><path d="M7 13 L7 26 L24 26 L24 13 L15.5 5.5 Z" fill="#fafafa" stroke="#777" stroke-width=".6"/><path d="M3 14.5 L15.5 3 L28 14.5" fill="none" stroke="#2c6fa0" stroke-width="2.6"/><path d="M3 14.5 L15.5 3 L28 14.5" fill="none" stroke="#5aa8d8" stroke-width="1"/><rect x="13" y="16" width="6.5" height="10" fill="#555"/><rect x="14.3" y="17.3" width="3.9" height="8.7" fill="#fafafa"/><rect x="16.5" y="21" width="1.2" height="1.6" fill="#555"/></svg>
<svg style="position:absolute;left:1324px;top:296px;" width="31" height="30" viewBox="0 0 31 30"><path d="M6.0 8 L9.0 5 L12.0 5.5 L12.0 24 L9.2 26 L6.0 25 Z" fill="#f0f0f0" stroke="#8a8a8a" stroke-width=".6"/><path d="M9.2 8.6 L9.2 26" stroke="#9a9a9a" stroke-width=".6"/><path d="M12.3 8 L15.3 5 L18.3 5.5 L18.3 24 L15.5 26 L12.3 25 Z" fill="#f0f0f0" stroke="#8a8a8a" stroke-width=".6"/><path d="M15.5 8.6 L15.5 26" stroke="#9a9a9a" stroke-width=".6"/><path d="M18.6 8 L21.6 5 L24.6 5.5 L24.6 24 L21.799999999999997 26 L18.6 25 Z" fill="#f0f0f0" stroke="#8a8a8a" stroke-width=".6"/><path d="M21.799999999999997 8.6 L21.799999999999997 26" stroke="#9a9a9a" stroke-width=".6"/></svg>
<svg style="position:absolute;left:1324px;top:327px;" width="31" height="29" viewBox="0 0 31 29"><path d="M4 5 L12 5 L14 8 L24 8 L24 24 L4 24 Z" fill="#d8d8d8" stroke="#9a9a9a" stroke-width=".6"/><path d="M9 12 L29 12 L24 25 L4 25 Z" fill="url(#wht)" stroke="#a8a8a8" stroke-width=".6"/></svg>
<svg style="position:absolute;left:1324px;top:357px;" width="31" height="29" viewBox="0 0 31 29"><rect x="4" y="4" width="23" height="21" fill="#e8e8e8" stroke="#fafafa" stroke-width=".8"/><rect x="7" y="7" width="7" height="5" fill="#f0c420" stroke="#7a5a00" stroke-width=".7"/><rect x="17" y="7" width="7" height="5" fill="#f0c420" stroke="#7a5a00" stroke-width=".7"/><path d="M10 15 L14 15 L14 18 L17 18 L17 22 L7 22 L7 18 L10 18 Z" fill="#f0c420" stroke="#7a5a00" stroke-width=".7"/><rect x="19" y="16" width="6" height="6" fill="#c8c8c8" stroke="#888" stroke-width=".6"/></svg>
<svg style="position:absolute;left:1324px;top:387px;" width="31" height="30" viewBox="0 0 31 30"><g><clipPath id="sc150_145_108"><circle cx="15" cy="14.5" r="10.8"/></clipPath><g clip-path="url(#sc150_145_108)"><rect x="4.199999999999999" y="3.6999999999999993" width="21.6" height="21.6" fill="#2a62d8"/><path d="M15 14.5 L20.4 -1.7000000000000028 L31.200000000000003 -1.7000000000000028 L31.200000000000003 18.28 Z" fill="#e03020"/><path d="M15 14.5 L31.200000000000003 18.28 L31.200000000000003 30.700000000000003 L16.08 30.700000000000003 Z" fill="#f0c418"/><path d="M15 14.5 L16.08 30.700000000000003 L-1.2000000000000028 30.700000000000003 L-1.2000000000000028 19.36 Z" fill="#30b838"/></g><circle cx="15" cy="14.5" r="10.8" fill="url(#sph)"/></g></svg>
<svg style="position:absolute;left:1324px;top:418px;" width="31" height="29" viewBox="0 0 31 29"><rect x="4" y="4" width="23" height="21" fill="#f4f4f4" stroke="#c8c8c8" stroke-width=".5"/><rect x="4" y="4" width="23" height="3.6" fill="#3b8fc4"/><rect x="6.5" y="10" width="5" height="3.4" fill="#3b8fc4" stroke="#1d5a86" stroke-width=".5"/><rect x="13.5" y="10.8" width="11" height="1.8" fill="#555"/><rect x="6.5" y="15" width="5" height="3.4" fill="#3b8fc4" stroke="#1d5a86" stroke-width=".5"/><rect x="13.5" y="15.8" width="11" height="1.8" fill="#555"/><rect x="6.5" y="20" width="5" height="3.4" fill="#3b8fc4" stroke="#1d5a86" stroke-width=".5"/><rect x="13.5" y="20.8" width="11" height="1.8" fill="#555"/></svg>
<svg style="position:absolute;left:1128px;top:822px;" width="30" height="23" viewBox="0 0 30 23"><path d="M2 17 L11 2 L20 17 Z" fill="#f0c810" stroke="#333" stroke-width="1"/><rect x="10.2" y="7" width="1.8" height="6" fill="#222"/><rect x="10.2" y="14" width="1.8" height="1.8" fill="#222"/><path d="M14 14 C16 10 19 8 22 7 L20 4 L29 4.5 L26.5 12.5 L24.5 10 C21 11 18 14 16 18 Z" fill="#2a2a2a"/><rect x="14" y="18" width="3" height="5" fill="#3b8fc4"/><rect x="18.5" y="15" width="3" height="8" fill="#3b8fc4"/><rect x="23" y="13" width="3" height="10" fill="#3b8fc4"/></svg>
<svg style="position:absolute;left:1572px;top:823px;" width="28" height="22" viewBox="0 0 28 22"><g transform="rotate(28 14 11)"><path d="M3 6 L8 2 L24 2 L24 14 L8 14 L3 10 Z" fill="#f4f4f4" stroke="#333" stroke-width="1"/><circle cx="7.5" cy="8" r="1.4" fill="#333"/><path d="M12 5 h9 M12 8 h9 M12 11 h9" stroke="#555" stroke-width="1"/></g></svg>
<div class="dd" style="left:1543px;top:832px;border-left-width:3px;border-right-width:3px;border-top:none;border-bottom:3.5px solid #f4f4f4"></div>
<svg style="position:absolute;left:19px;top:859.5px;" width="30" height="30" viewBox="0 0 30 30"><defs><linearGradient id="wing" gradientUnits="userSpaceOnUse" x1="0" y1="0" x2="30" y2="30"><stop offset="0" stop-color="#6ad8fc"/><stop offset="1" stop-color="#189de8"/></linearGradient></defs><rect x="0" y="0" width="14" height="14" rx="1" fill="url(#wing)"/><rect x="15.5" y="0" width="14" height="14" rx="1" fill="url(#wing)"/><rect x="0" y="15.5" width="14" height="14" rx="1" fill="url(#wing)"/><rect x="15.5" y="15.5" width="14" height="14" rx="1" fill="url(#wing)"/></svg>
<svg style="position:absolute;left:79px;top:863px;" width="24" height="24" viewBox="0 0 24 24"><circle cx="10" cy="10" r="7" fill="none" stroke="#f4f4f4" stroke-width="2"/><path d="M15 15.5 L20.5 21" stroke="#f4f4f4" stroke-width="2.4" stroke-linecap="round"/></svg>
<svg style="position:absolute;left:356px;top:858px;" width="32" height="32" viewBox="0 0 32 32"><rect x="2" y="11" width="19" height="17" rx="2" fill="#7a7a7a" opacity=".85"/><rect x="9" y="3" width="21" height="19" rx="2.5" fill="url(#wht)"/></svg>
<svg style="position:absolute;left:410px;top:857px;" width="34" height="35" viewBox="0 0 34 35"><path d="M8 3 C14 1.5 22 1.5 27 3.5 C31 5.5 32 10 32 15 C32 21 30.5 25 26 26.5 C22 27.8 17 28 13.5 27.5 L9 33 L9 26.5 C4 25 2.5 21 2.5 15 C2.5 9 3.5 4.8 8 3 Z" fill="#7b62e0" stroke="#f0ecff" stroke-width="2"/><path d="M11 9 C10 10 10 12 11.5 15 C13.5 19 17 21.5 20.5 22.5 C22.5 23 24 21.5 23.8 20.3 L20.8 18 L19 19.3 C16.5 18.3 14.8 16 14.3 14 L15.8 12.6 L13.5 8.8 C12.6 8.2 11.6 8.4 11 9 Z" fill="#fff"/><path d="M17.5 8 C21.5 8.3 24.3 11 24.5 15 M18 10.5 C20.3 10.8 21.8 12.4 22 14.7" fill="none" stroke="#fff" stroke-width="1.2" stroke-linecap="round"/></svg>
<svg style="position:absolute;left:466px;top:859px;" width="32" height="30" viewBox="0 0 32 30"><rect x="9" y="2" width="20" height="26" rx="2" fill="#2b7cd3"/><rect x="9" y="2" width="20" height="8.5" fill="#41a5ee"/><rect x="9" y="19" width="20" height="9" rx="1" fill="#185abd" opacity=".7"/><rect x="19" y="2" width="10" height="26" fill="#fff" opacity=".12"/><rect x="1" y="7.5" width="16" height="16" rx="1.6" fill="#185abd"/><text x="9" y="20" text-anchor="middle" font-size="11.5" font-weight="700" fill="#fff" font-family="Liberation Sans,sans-serif">W</text></svg>
<svg style="position:absolute;left:522px;top:859px;" width="32" height="30" viewBox="0 0 32 30"><rect x="9" y="2" width="20" height="26" rx="2" fill="#1490df"/><rect x="9" y="2" width="20" height="8.5" fill="#28a8ea"/><rect x="9" y="19" width="20" height="9" rx="1" fill="#0f64b8" opacity=".7"/><rect x="19" y="2" width="10" height="26" fill="#fff" opacity=".12"/><rect x="1" y="7.5" width="16" height="16" rx="1.6" fill="#0f64b8"/><text x="9" y="20" text-anchor="middle" font-size="11.5" font-weight="700" fill="#fff" font-family="Liberation Sans,sans-serif">O</text></svg>
<svg style="position:absolute;left:577px;top:859px;" width="32" height="30" viewBox="0 0 32 30"><rect x="9" y="2" width="20" height="26" rx="2" fill="#21a366"/><rect x="9" y="2" width="20" height="8.5" fill="#33c481"/><rect x="9" y="19" width="20" height="9" rx="1" fill="#107c41" opacity=".7"/><rect x="19" y="2" width="10" height="26" fill="#fff" opacity=".12"/><rect x="1" y="7.5" width="16" height="16" rx="1.6" fill="#107c41"/><text x="9" y="20" text-anchor="middle" font-size="11.5" font-weight="700" fill="#fff" font-family="Liberation Sans,sans-serif">X</text></svg>
<svg style="position:absolute;left:632px;top:859px;" width="32" height="30" viewBox="0 0 32 30"><circle cx="18" cy="15" r="12.5" fill="#ed6c47"/><path d="M18 2.5 A12.5 12.5 0 0 1 30.5 15 L18 15 Z" fill="#ff8f6b"/><path d="M18 15 L30.5 15 A12.5 12.5 0 0 1 14 27 Z" fill="#c43e1c" opacity=".55"/><rect x="1" y="7.5" width="16" height="16" rx="1.6" fill="#c43e1c"/><text x="9" y="20" text-anchor="middle" font-size="11.5" font-weight="700" fill="#fff" font-family="Liberation Sans,sans-serif">P</text></svg>
<svg style="position:absolute;left:687px;top:858px;" width="32" height="32" viewBox="0 0 32 32"><rect x="1" y="1" width="30" height="30" fill="#ef443b"/><path d="M12.5 9.5 L19 16 L12.5 22.5 L6 16 Z" fill="#fff"/><path d="M18 9.5 L24.5 16 L18 22.5 L15.8 20.3 L20.1 16 L15.8 11.7 Z" fill="#fff"/></svg>
<svg style="position:absolute;left:742px;top:858px;" width="32" height="32" viewBox="0 0 32 32"><clipPath id="cc758"><circle cx="16" cy="16" r="15"/></clipPath><g clip-path="url(#cc758)"><rect width="32" height="32" fill="#e8453c"/><path d="M16 16 L-4 4 L-4 36 L22 36 Z" fill="#34a853"/><path d="M16 16 L36 16 L36 40 L10 40 L16 29 Z" fill="#fbbc05"/><path d="M16 16 L29 16 L36 12 L36 36 L9.5 36 Z" fill="#fbbc05"/></g><circle cx="16" cy="16" r="7.2" fill="#fff"/><circle cx="16" cy="16" r="5.6" fill="#4285f4"/></svg>
<svg style="position:absolute;left:798px;top:858px;" width="32" height="33" viewBox="0 0 32 33"><path d="M2 5 L16 1.5 L30 5 L30 24 L16 29 L2 24 Z" fill="#da2128"/><path d="M2 5 L16 9 L30 5 M16 9 L16 29" fill="none" stroke="#a01016" stroke-width=".8"/><text x="3.5" y="20" font-size="13" font-weight="700" fill="#fff" font-family="Liberation Sans,sans-serif">S</text><text x="15.5" y="20.5" font-size="13" font-weight="700" fill="#fff" font-family="Liberation Sans,sans-serif">W</text><rect x="8" y="21.5" width="22" height="9" fill="#1a1a1a" opacity=".55"/><text x="19" y="30" text-anchor="middle" font-size="8.5" font-weight="700" fill="#fff" font-family="Liberation Sans,sans-serif">2024</text></svg>
<svg style="position:absolute;left:853px;top:858px;" width="32" height="32" viewBox="0 0 32 32"><path d="M1.5 5.5 C1.5 4 2.5 3 4 3 L11 3 L14 6 L28 6 C29.5 6 30.5 7 30.5 8.5 L30.5 27 L1.5 27 Z" fill="#f0b429"/><rect x="1.5" y="8" width="29" height="20" rx="1.5" fill="#fbd35a"/><rect x="8" y="19.5" width="16" height="8.5" rx="1.5" fill="#2e8bd8"/><rect x="11.5" y="22" width="9" height="1.8" rx=".9" fill="#1560a8"/></svg>
<svg style="position:absolute;left:908px;top:858px;" width="33" height="33" viewBox="0 0 33 33"><defs><linearGradient id="edg" x1="0" y1="0" x2="1" y2="1"><stop offset="0" stop-color="#36c8d8"/><stop offset=".5" stop-color="#1b8fe0"/><stop offset="1" stop-color="#1358b8"/></linearGradient><linearGradient id="edg2" x1="0" y1="0" x2="1" y2="0"><stop offset="0" stop-color="#2fb0e8"/><stop offset="1" stop-color="#5ad86a"/></linearGradient></defs><circle cx="16" cy="16" r="14.5" fill="url(#edg)"/><path d="M3 13 C5 5 12 1.5 18 1.5 C26 1.5 31 8 30.5 14 C30 19 25 20.5 21.5 19 C24 16 21 11 16 11 C10 11 6 16 7 22 C3 19 2 16 3 13 Z" fill="url(#edg2)"/><path d="M12 17 C11 22 15 27 21 27.5 C25 27.5 28 25.5 29.5 23 C26 25 20 24 19 19.5 Z" fill="#0c4a9c" opacity=".8"/><circle cx="9.5" cy="24" r="6.5" fill="#6a6a6a"/><circle cx="9.5" cy="22" r="2.4" fill="#e8c8a8"/><path d="M5 29 C5 24.5 14 24.5 14 29 Z" fill="#2a2a2a"/></svg>
<svg style="position:absolute;left:961px;top:857px;" width="36" height="34" viewBox="0 0 36 34"><path d="M1 19 L10 14 L15 17 L9 22 Z" fill="#2a6cc8"/><path d="M10 14 C15 11 19 5 22 2 L24 5 L15 17 Z" fill="#3c8cd8"/><path d="M22 2 C25 3 29 18 34 25 C30 23 27 23 24 27 C21 31 19 31 16 28 L9 22 C14 19 18 10 22 2 Z" fill="#e86a10"/><path d="M22 2 C24 8 25 16 24 27 C21 31 19 31 16 28 C20 20 21 10 22 2 Z" fill="#a82810" opacity=".75"/><path d="M22 2 C25 3 29 18 34 25 C30 23 27 23 24 27 C25.5 17 24 8 22 2 Z" fill="#f8a020" opacity=".9"/></svg>
<svg style="position:absolute;left:1019px;top:858px;" width="32" height="32" viewBox="0 0 32 32"><clipPath id="cc1035"><circle cx="16" cy="16" r="15"/></clipPath><g clip-path="url(#cc1035)"><rect width="32" height="32" fill="#e8453c"/><path d="M16 16 L-4 4 L-4 36 L22 36 Z" fill="#34a853"/><path d="M16 16 L36 16 L36 40 L10 40 L16 29 Z" fill="#fbbc05"/><path d="M16 16 L29 16 L36 12 L36 36 L9.5 36 Z" fill="#fbbc05"/></g><circle cx="16" cy="16" r="7.2" fill="#fff"/><circle cx="16" cy="16" r="5.6" fill="#4285f4"/></svg>
<div style="position:absolute;left:477.5px;top:895px;width:8px;height:3.5px;border-radius:2px;background:#9a9494"></div>
<div style="position:absolute;left:810.5px;top:895px;width:7px;height:3.5px;border-radius:2px;background:#9a9494"></div>
<div style="position:absolute;left:865.5px;top:895px;width:7px;height:3.5px;border-radius:2px;background:#9a9494"></div>
<div style="position:absolute;left:1031.0px;top:895px;width:7px;height:3.5px;border-radius:2px;background:#9a9494"></div>
<svg style="position:absolute;left:1281px;top:866px;" width="18" height="16" viewBox="0 0 18 16"><path d="M3 11 L9 5 L15 11" fill="none" stroke="#fff" stroke-width="1.7"/></svg>
<svg style="position:absolute;left:1374px;top:863px;" width="24" height="22" viewBox="0 0 24 22"><g fill="none" stroke="#fff" stroke-width="1.5" stroke-linecap="round"><path d="M2.5 9 C7.5 3.5 16.5 3.5 21.5 9"/><path d="M5.8 12.3 C9.2 8.6 14.8 8.6 18.2 12.3"/><path d="M9 15.5 C10.8 13.7 13.2 13.7 15 15.5"/></g><circle cx="12" cy="18.2" r="1.5" fill="#fff"/></svg>
<svg style="position:absolute;left:1404px;top:864px;" width="24" height="20" viewBox="0 0 24 20"><path d="M2 7.5 L5.5 7.5 L10 3.5 L10 16.5 L5.5 12.5 L2 12.5 Z" fill="none" stroke="#fff" stroke-width="1.4" stroke-linejoin="round"/><path d="M14 6.5 L20.5 13.5 M20.5 6.5 L14 13.5" stroke="#fff" stroke-width="1.4"/></svg>
<svg style="position:absolute;left:1434px;top:865px;" width="24" height="18" viewBox="0 0 24 18"><rect x="1.5" y="3.5" width="17" height="11" rx="2.5" fill="none" stroke="#fff" stroke-width="1.4"/><rect x="4" y="6" width="6.5" height="6" rx="1" fill="#fff"/><path d="M20.5 7 V11" stroke="#fff" stroke-width="1.8" stroke-linecap="round"/></svg>
<svg style="position:absolute;left:1556.5px;top:864px;" width="21" height="23" viewBox="0 0 24 26"><path d="M12 3 C7.5 3 5.5 6.5 5.5 10.5 L5.5 15 L3.5 18.5 L20.5 18.5 L18.5 15 L18.5 10.5 C18.5 6.5 16.5 3 12 3 Z" fill="none" stroke="#fff" stroke-width="1.5" stroke-linejoin="round"/><path d="M9.5 21 C10.5 23 13.5 23 14.5 21" fill="none" stroke="#fff" stroke-width="1.5"/></svg>
</div></body></html>
